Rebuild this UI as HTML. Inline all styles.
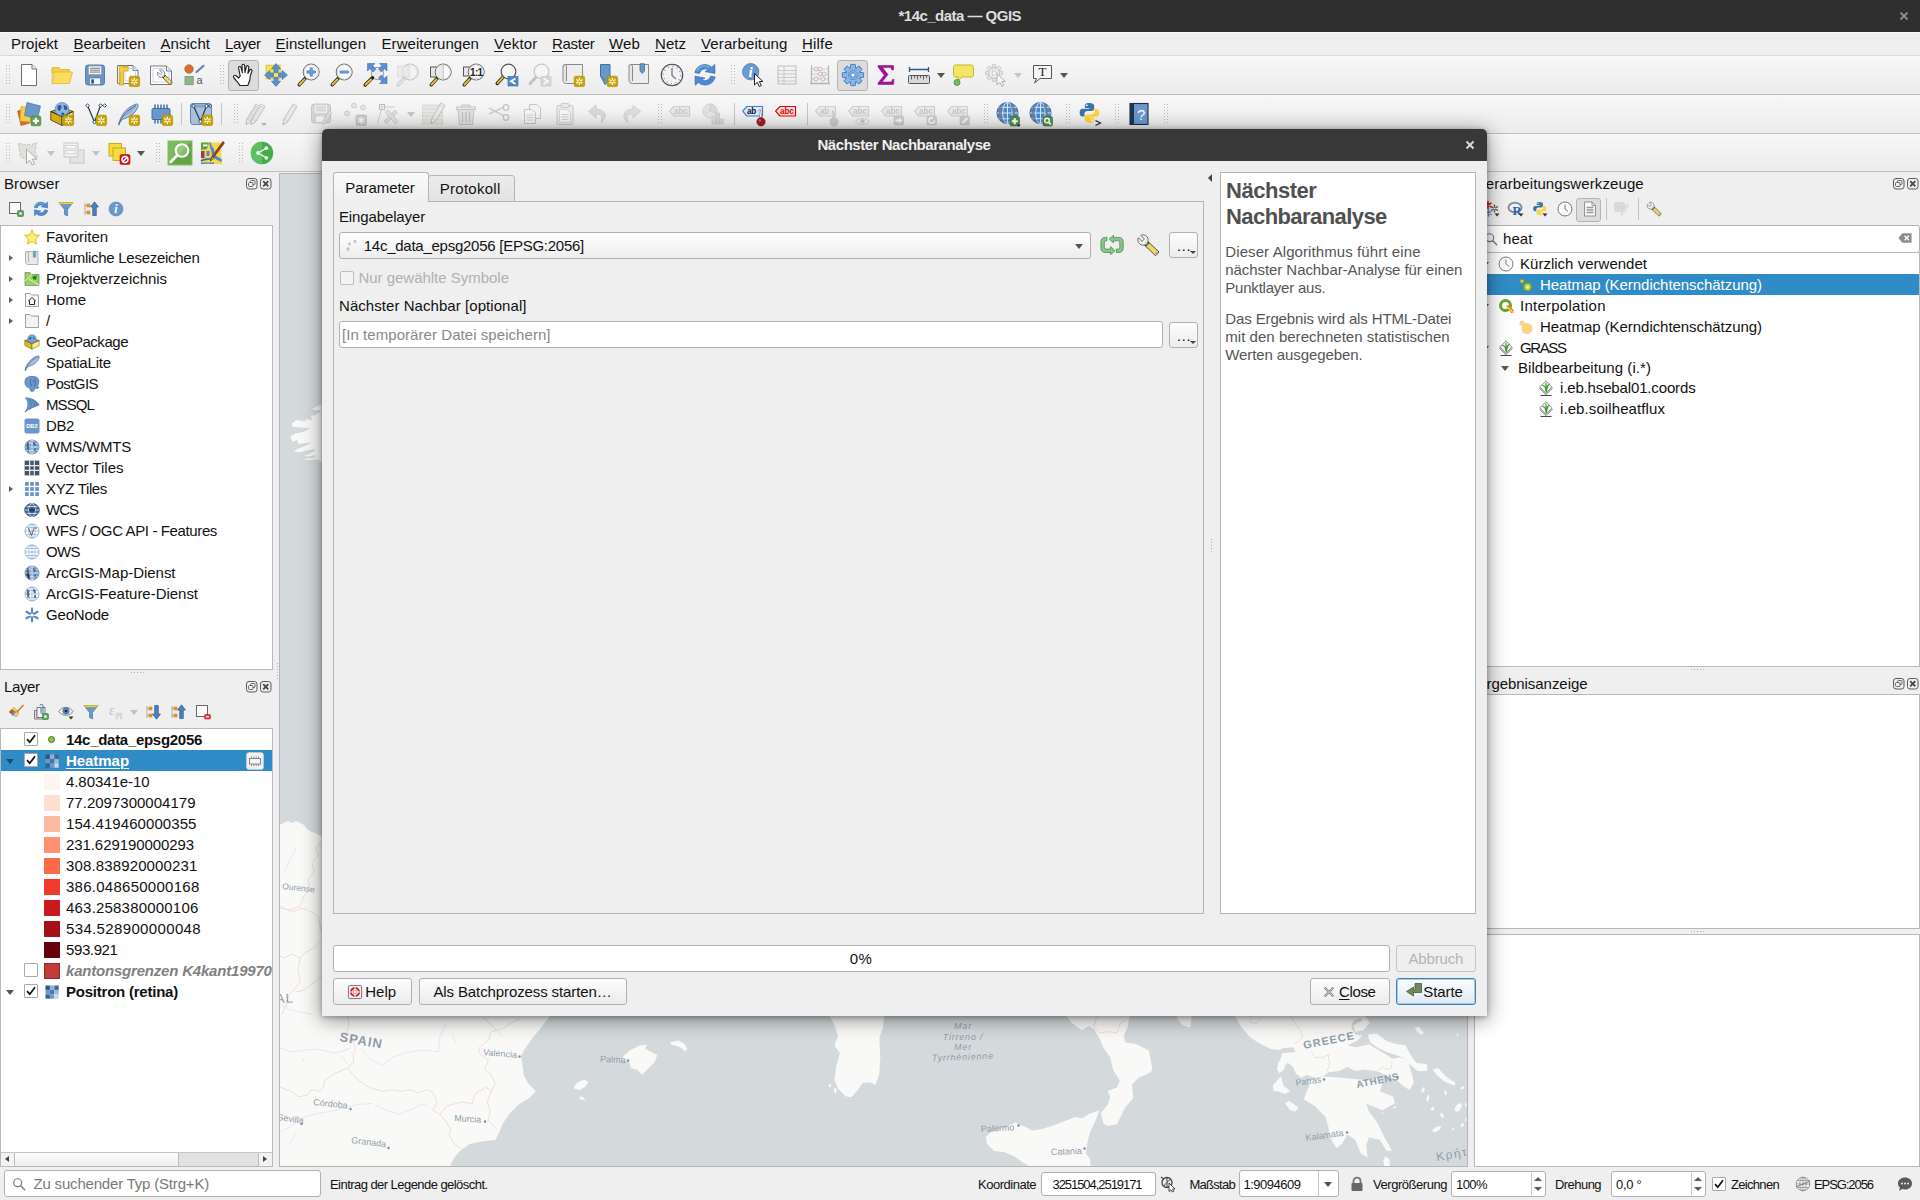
<!DOCTYPE html>
<html lang="de"><head><meta charset="utf-8"><title>*14c_data — QGIS</title>
<style>
*{box-sizing:border-box;margin:0;padding:0}
html,body{width:1920px;height:1200px;overflow:hidden;background:#efefef}
body{font-family:"Liberation Sans","DejaVu Sans",sans-serif;font-size:15px;color:#111;position:relative;-webkit-font-smoothing:antialiased}
.a{position:absolute}
.t{position:absolute;white-space:pre;line-height:20px;height:20px}
u{text-decoration:underline;text-underline-offset:2px;text-decoration-thickness:1px}
#titlebar{left:0;top:0;width:1920px;height:32px;background:#2f2f2f}
#titlebar .t{color:#dedede;font-weight:bold;font-size:15px}
#menubar{left:0;top:32px;width:1920px;height:24px;background:#efefef;border-top:1px solid #fafafa;border-bottom:1px solid #d9d9d9}
.tb{left:0;width:1920px;height:38px;background:linear-gradient(#f7f7f7,#ececec);border-bottom:1px solid #bdbdbd;border-top:1px solid #f9f9f9}
.hdl{position:absolute;width:5px;height:22px;background-image:radial-gradient(circle,#b8b8b8 0.8px,transparent 1px);background-size:3px 3px}
.sep{position:absolute;width:1px;height:22px;background:#c4c4c4}
.ic{position:absolute;width:24px;height:24px;overflow:visible}
.ic16{position:absolute;width:16px;height:16px;overflow:visible}
.pressed{position:absolute;background:#dcdcdc;border:1px solid #b4b4b4;border-radius:3px}
.box{position:absolute;background:#fff;border:1px solid #b9b9b9}
.dockbtn{position:absolute;width:12px;height:12px;border:1px solid #555;border-radius:3px}
.arrow-r{position:absolute;width:0;height:0;border-left:4px solid #5f5f5f;border-top:3.5px solid transparent;border-bottom:3.5px solid transparent}
.arrow-d{position:absolute;width:0;height:0;border-top:5px solid #555;border-left:4px solid transparent;border-right:4px solid transparent}
.cb{position:absolute;width:14px;height:14px;border:1px solid #a8a8a8;background:#fff;border-radius:1px}
.btn{position:absolute;border:1px solid #b0b0b0;border-radius:3px;background:linear-gradient(#fdfdfd,#ececec)}
.inp{position:absolute;border:1px solid #b0b0b0;border-radius:3px;background:#fff}
.grip{position:absolute;background-image:radial-gradient(circle,#b0b0b0 0.7px,transparent 0.9px);background-size:3px 3px}
</style>
</head>
<body>
<div class="a" id="titlebar"></div>
<div class="t " style="left:898.5px;top:6px;letter-spacing:-0.524px;color:#dedede;font-weight:bold;font-size:15px">*14c_data — QGIS</div>
<svg class="a" style="left:1899px;top:11px;width:10px;height:10px" viewBox="0 0 10 10"><path d="M1.500 1.500L8.500 8.500M8.500 1.500L1.500 8.500" stroke="#8f8f8f" stroke-width="1.800"/></svg>
<div class="a" id="menubar"></div>
<div class="t " style="left:11px;top:34px;letter-spacing:0.045px;">Pro<u>j</u>ekt</div>
<div class="t " style="left:73.5px;top:34px;letter-spacing:-0.055px;"><u>B</u>earbeiten</div>
<div class="t " style="left:160.5px;top:34px;letter-spacing:0.044px;"><u>A</u>nsicht</div>
<div class="t " style="left:225px;top:34px;letter-spacing:-0.404px;"><u>L</u>ayer</div>
<div class="t " style="left:275.5px;top:34px;letter-spacing:0.033px;"><u>E</u>instellungen</div>
<div class="t " style="left:381.5px;top:34px;letter-spacing:0.060px;">Er<u>w</u>eiterungen</div>
<div class="t " style="left:494px;top:34px;letter-spacing:0.163px;"><u>V</u>ektor</div>
<div class="t " style="left:552px;top:34px;letter-spacing:-0.280px;"><u>R</u>aster</div>
<div class="t " style="left:609px;top:34px;letter-spacing:0.143px;"><u>W</u>eb</div>
<div class="t " style="left:655px;top:34px;letter-spacing:0.039px;"><u>N</u>etz</div>
<div class="t " style="left:701px;top:34px;letter-spacing:0.120px;"><u>V</u>erarbeitung</div>
<div class="t " style="left:802px;top:34px;letter-spacing:0.199px;"><u>H</u>ilfe</div>
<div class="a tb" style="left:0px;top:56px;width:1920px;height:39px;"></div>
<div class="a tb" style="left:0px;top:95px;width:1920px;height:39px;"></div>
<div class="a tb" style="left:0px;top:134px;width:1920px;height:38px;"></div>
<div class="hdl" style="left:5px;top:64px;width:5px;height:22px;"></div>
<svg class="a" style="left:17.0px;top:63.0px;width:24px;height:24px;overflow:visible" viewBox="0 0 24 24"><path d="M4.5 1.5H15L19.5 6V22.5H4.5Z" fill="#fff" stroke="#6e6e6e" stroke-width="1"/><path d="M15 1.5V6H19.5" fill="#f2f2f2" stroke="#6e6e6e" stroke-width="1"/></svg>
<svg class="a" style="left:50.0px;top:63.0px;width:24px;height:24px;overflow:visible" viewBox="0 0 24 24"><path d="M2 4.5H9L10.5 6.5H19.5V10H2Z" fill="#f4cf47" stroke="#d9b53a" stroke-width=".8"/><path d="M4.5 9H22.5L19.5 20.5H2.2Z" fill="#fbdc5e" stroke="#dcb93e" stroke-width=".8"/><path d="M2.2 20.5V5" stroke="#dcb93e" stroke-width=".8"/></svg>
<svg class="a" style="left:83.0px;top:63.0px;width:24px;height:24px;overflow:visible" viewBox="0 0 24 24"><rect x="2.500" y="2" width="19" height="20" rx="2.500" fill="#6a93c6" stroke="#5580b4" stroke-width="1"/><rect x="5.500" y="3" width="13" height="8.500" fill="#efefef" stroke="#9a9a9a" stroke-width=".600"/><path d="M7 5.300H17M7 7.200H17M7 9.100H17" stroke="#555" stroke-width=".700"/><rect x="6.500" y="15" width="11" height="6.500" fill="#f4f4f4" stroke="#4a6f9e" stroke-width=".600"/><rect x="8.300" y="16.300" width="2.600" height="4.200" fill="#2f507d"/></svg>
<svg class="a" style="left:116.0px;top:63.0px;width:24px;height:24px;overflow:visible" viewBox="0 0 24 24"><path d="M1.500 2.500H17L22 7.500V20.500H1.500Z" fill="#fff" stroke="#7a7a7a" stroke-width="1"/><path d="M17 2.500V7.500H22" fill="#f0f0f0" stroke="#7a7a7a"/><path d="M9 5.500H19.500V18H9Z" fill="none" stroke="#b8c8ee" stroke-width=".800"/><path d="M3.300 3.300H12.100V8H7.500V22H3.300Z" fill="#f6cf3e" stroke="#c9a227" stroke-width=".800"/><path d="M3.500 10H5.500M3.500 12H5M3.500 14H5.500M3.500 16H5M3.500 18H5.500M3.500 20H5M8 3.500V5.500M10 3.500V5" stroke="#b8921d" stroke-width=".600"/><rect x="13.2" y="13.2" width="10.4" height="10.4" rx="1.6" fill="#c9a400" stroke="#a88a00" stroke-width=".6"/><g stroke="#fff" stroke-width="1.25" transform="translate(18.4 18.4)"><path d="M0 -3.700V3.700M-3.200 -1.850L3.200 1.850M-3.200 1.850L3.200 -1.850"/></g><circle cx="18.4" cy="18.4" r="1.150" fill="#c9a400"/></svg>
<svg class="a" style="left:149.0px;top:63.0px;width:24px;height:24px;overflow:visible" viewBox="0 0 24 24"><path d="M1.500 3H17.500L22.500 8V21.500H1.500Z" fill="#fff" stroke="#7a7a7a" stroke-width="1"/><path d="M17.500 3V8H22.500" fill="#f0f0f0" stroke="#7a7a7a"/><path d="M4 5.500H20V19H4Z" fill="none" stroke="#b8c8ee" stroke-width=".800"/><g transform="translate(7 5.500) scale(.72)"><path d="M8.400 12L12 8.600L23 19L19.600 22.800Z" fill="#ecd774" stroke="#5a4f1e" stroke-width="1" stroke-linejoin="round"/><path d="M8.400 12L12 8.600L13.600 10.100L10 13.500Z" fill="#3a3a3a"/><path d="M4.720 2.320A5.200 5.200 0 1 1 2.320 4.720L6 8.400L8.400 6Z" fill="#f2f2f2" stroke="#6e6e6e" stroke-width="1" stroke-linejoin="round"/><path d="M9.400 11L11 9.400" stroke="#c8c8c8" stroke-width="2.400"/><circle cx="20.600" cy="20.200" r="1" fill="#b9b9b9" stroke="#777" stroke-width=".400"/></g></svg>
<svg class="a" style="left:182.0px;top:63.0px;width:24px;height:24px;overflow:visible" viewBox="0 0 24 24"><circle cx="7" cy="6" r="4.300" fill="#d86c36" stroke="#b9562a" stroke-width=".600"/><rect x="3" y="13.500" width="8.200" height="8.200" fill="#8fb58d" stroke="#6f9a6d" stroke-width=".800"/><path d="M14.500 9L21.500 2.800" stroke="#5b85bd" stroke-width="2.200" stroke-linecap="round"/><text x="14.500" y="21" font-family="Liberation Sans,sans-serif" font-size="11" fill="#555">a</text></svg>
<div class="hdl" style="left:219px;top:64px;width:5px;height:22px;"></div>
<div class="pressed" style="left:228px;top:60px;width:31px;height:31px;"></div>
<svg class="a" style="left:231.0px;top:63.0px;width:24px;height:24px;overflow:visible" viewBox="0 0 24 24"><path d="M9.200 13.200L7.600 5.200C7.200 3.400 9.600 2.800 10.100 4.600L11.300 9.600L11 2.700C10.900 0.900 13.500 0.800 13.600 2.600L14 9.500L15.300 3.700C15.700 2 18.100 2.500 17.800 4.300L16.900 10.400L18.700 7.100C19.500 5.600 21.500 6.600 20.900 8.200L19.300 12.700C19.300 16.500 18.300 19.500 16.800 22.500H8.800C7.800 20 4.600 17.300 2.800 14.600C1.800 13.100 3.400 11.500 5 12.700L7.600 15Z" fill="#fff" stroke="#222" stroke-width="1.150" stroke-linejoin="round"/></svg>
<svg class="a" style="left:264.0px;top:63.0px;width:24px;height:24px;overflow:visible" viewBox="0 0 24 24"><rect x="2.100" y="2.200" width="14" height="13.600" fill="#f6e54a" stroke="#d4b62a" stroke-width=".800"/><g transform="translate(12 12)" fill="#5b8fce" stroke="#3d72b4" stroke-width=".700" stroke-linejoin="round"><path d="M0 -11.400L4.600 -6.200H2V-2.500H-2V-6.200H-4.600Z"/><g transform="rotate(90)"><path d="M0 -11.400L4.600 -6.200H2V-2.500H-2V-6.200H-4.600Z"/></g><g transform="rotate(180)"><path d="M0 -11.400L4.600 -6.200H2V-2.500H-2V-6.200H-4.600Z"/></g><g transform="rotate(270)"><path d="M0 -11.400L4.600 -6.200H2V-2.500H-2V-6.200H-4.600Z"/></g></g></svg>
<svg class="a" style="left:297.0px;top:63.0px;width:24px;height:24px;overflow:visible" viewBox="0 0 24 24"><path d="M8.800 14.600L2.200 21.800" stroke="#222" stroke-width="3.400" stroke-linecap="round"/><path d="M7.400 16.300L2.500 21.500" stroke="#f0c330" stroke-width="1.900" stroke-linecap="round"/><circle cx="14.200" cy="9" r="8" fill="#fafafa" stroke="#666" stroke-width="1"/><circle cx="14.200" cy="9" r="7" fill="none" stroke="#dcdcdc" stroke-width="1"/><path d="M14.200 4.400V13.600M9.600 9H18.800" stroke="#3d72b4" stroke-width="2.800"/><path d="M14.200 4.900V13.100M10.100 9H18.300" stroke="#6fa0dc" stroke-width="1.600"/></svg>
<svg class="a" style="left:330.0px;top:63.0px;width:24px;height:24px;overflow:visible" viewBox="0 0 24 24"><path d="M8.800 14.600L2.200 21.800" stroke="#222" stroke-width="3.400" stroke-linecap="round"/><path d="M7.400 16.300L2.500 21.500" stroke="#f0c330" stroke-width="1.900" stroke-linecap="round"/><circle cx="14.200" cy="9" r="8" fill="#fafafa" stroke="#666" stroke-width="1"/><circle cx="14.200" cy="9" r="7" fill="none" stroke="#dcdcdc" stroke-width="1"/><path d="M9.600 9H18.800" stroke="#3d72b4" stroke-width="2.800"/><path d="M10.100 9H18.300" stroke="#6fa0dc" stroke-width="1.600"/></svg>
<svg class="a" style="left:363.0px;top:63.0px;width:24px;height:24px;overflow:visible" viewBox="0 0 24 24"><circle cx="14.500" cy="10.500" r="6.200" fill="#ececec" stroke="#9a9a9a" stroke-width="1"/><g fill="#5b8fce" stroke="#3d72b4" stroke-width=".600" stroke-linejoin="round"><g transform="translate(4.500 0.500)"><path d="M0 0H7.500L5.200 2.300L8.500 5.600L5.600 8.500L2.300 5.200L0 7.500Z"/></g><g transform="translate(24 0.500) scale(-1 1)"><path d="M0 0H7.500L5.200 2.300L8.500 5.600L5.600 8.500L2.300 5.200L0 7.500Z"/></g><g transform="translate(24 20.500) scale(-1 -1)"><path d="M0 0H7.500L5.200 2.300L8.500 5.600L5.600 8.500L2.300 5.200L0 7.500Z"/></g></g><path d="M9.500 14.800L2.200 22" stroke="#222" stroke-width="3.400" stroke-linecap="round"/><path d="M8 16.500L2.500 21.700" stroke="#f0c330" stroke-width="1.900" stroke-linecap="round"/></svg>
<svg class="a" style="left:396.0px;top:63.0px;width:24px;height:24px;opacity:.5;filter:grayscale(.6);overflow:visible" viewBox="0 0 24 24"><path d="M8.800 14.600L2.200 21.800" stroke="#999" stroke-width="3.400" stroke-linecap="round"/><path d="M7.400 16.300L2.500 21.500" stroke="#ddd" stroke-width="1.900" stroke-linecap="round"/><circle cx="14.200" cy="9" r="8" fill="#f3f3f3" stroke="#888" stroke-width="1"/><circle cx="14.200" cy="9" r="7" fill="none" stroke="#dcdcdc" stroke-width="1"/><rect x="1.500" y="3" width="12" height="11" fill="#e2dcc0" stroke="#999" stroke-width=".600" opacity=".700"/></svg>
<svg class="a" style="left:429.0px;top:63.0px;width:24px;height:24px;overflow:visible" viewBox="0 0 24 24"><rect x="1.500" y="4" width="11" height="10" fill="#e6e6e6" stroke="#555" stroke-width="1"/><path d="M8.800 14.600L2.200 21.800" stroke="#222" stroke-width="3.400" stroke-linecap="round"/><path d="M7.400 16.300L2.500 21.500" stroke="#f0c330" stroke-width="1.900" stroke-linecap="round"/><circle cx="14.200" cy="9" r="8" fill="#fafafa" stroke="#666" stroke-width="1"/><circle cx="14.200" cy="9" r="7" fill="none" stroke="#dcdcdc" stroke-width="1"/><path d="M14.200 1.600A7.400 7.400 0 0 0 14.200 16.400Z" fill="#e6e6e6" opacity=".800"/><path d="M14.200 1.500V16.500" stroke="#bbb" stroke-width=".900"/></svg>
<svg class="a" style="left:462.0px;top:63.0px;width:24px;height:24px;overflow:visible" viewBox="0 0 24 24"><rect x="1.500" y="4" width="9" height="9" fill="#e6e6e6" stroke="#555" stroke-width="1"/><path d="M8.800 14.600L2.200 21.800" stroke="#222" stroke-width="3.400" stroke-linecap="round"/><path d="M7.400 16.300L2.500 21.500" stroke="#f0c330" stroke-width="1.900" stroke-linecap="round"/><circle cx="14.200" cy="9" r="8" fill="#fafafa" stroke="#666" stroke-width="1"/><circle cx="14.200" cy="9" r="7" fill="none" stroke="#dcdcdc" stroke-width="1"/><text x="14.300" y="12.600" text-anchor="middle" font-family="Liberation Sans,sans-serif" font-weight="bold" font-size="10" letter-spacing="-.700" fill="#222">1:1</text></svg>
<svg class="a" style="left:495.0px;top:63.0px;width:24px;height:24px;overflow:visible" viewBox="0 0 24 24"><path d="M8.500 13.600L2.200 20.500" stroke="#2b2b2b" stroke-width="3.400" stroke-linecap="round"/><path d="M8.300 13.900L2.600 20.100" stroke="#f0c330" stroke-width="1.700" stroke-linecap="round"/><circle cx="13.500" cy="8.500" r="7.300" fill="#f8f8f8" stroke="#555" stroke-width="1.200"/><rect x="13" y="13.500" width="10" height="9.500" fill="#4f86c6" stroke="#3a6ea8" stroke-width=".600"/><path d="M20.500 15.500L16 18.200L20.500 21" fill="none" stroke="#fff" stroke-width="2"/></svg>
<svg class="a" style="left:528.0px;top:63.0px;width:24px;height:24px;opacity:.5;filter:grayscale(.6);overflow:visible" viewBox="0 0 24 24"><path d="M8.500 13.600L2.200 20.500" stroke="#999" stroke-width="3.200" stroke-linecap="round"/><circle cx="13.500" cy="8.500" r="7.300" fill="#f8f8f8" stroke="#999" stroke-width="1.200"/><rect x="13" y="13.500" width="10" height="9.500" fill="#bbb" stroke="#999" stroke-width=".600"/><path d="M15.500 15.500L20 18.200L15.500 21" fill="none" stroke="#fff" stroke-width="2"/></svg>
<svg class="a" style="left:561.0px;top:63.0px;width:24px;height:24px;overflow:visible" viewBox="0 0 24 24"><path d="M4 1.500H21.500V20.500H5.500C3 20.500 2 19 2 17.500V3.500C2 1.500 4 1.500 4 1.500Z" fill="#e6e6e6" stroke="#8a8a8a" stroke-width="1"/><path d="M2 3.500C2 1 5.500 1 5.500 3.500V18" fill="none" stroke="#8a8a8a" stroke-width="1"/><path d="M6 2H21V20H6Z" fill="#efefef" opacity=".7"/><rect x="13.2" y="13.2" width="10.4" height="10.4" rx="1.6" fill="#c9a400" stroke="#a88a00" stroke-width=".6"/><g stroke="#fff" stroke-width="1.25" transform="translate(18.4 18.4)"><path d="M0 -3.700V3.700M-3.200 -1.850L3.200 1.850M-3.200 1.850L3.200 -1.850"/></g><circle cx="18.4" cy="18.4" r="1.150" fill="#c9a400"/></svg>
<svg class="a" style="left:594.0px;top:63.0px;width:24px;height:24px;overflow:visible" viewBox="0 0 24 24"><path d="M6.500 1.500H16V14H13.500V19L6.500 13Z" fill="#6b97cb" stroke="#3f6ea8" stroke-width="1" stroke-linejoin="round"/><path d="M6.500 13L11 21.500L13.500 19" fill="#6b97cb" stroke="#3f6ea8" stroke-width="1" stroke-linejoin="round"/><rect x="13.2" y="13.2" width="10.4" height="10.4" rx="1.6" fill="#c9a400" stroke="#a88a00" stroke-width=".6"/><g stroke="#fff" stroke-width="1.25" transform="translate(18.4 18.4)"><path d="M0 -3.700V3.700M-3.200 -1.850L3.200 1.850M-3.200 1.850L3.200 -1.850"/></g><circle cx="18.4" cy="18.4" r="1.150" fill="#c9a400"/></svg>
<svg class="a" style="left:627.0px;top:63.0px;width:24px;height:24px;overflow:visible" viewBox="0 0 24 24"><path d="M4 1.500H21.500V20.500H5.500C3 20.500 2 19 2 17.500V3.500C2 1.500 4 1.500 4 1.500Z" fill="#e6e6e6" stroke="#8a8a8a" stroke-width="1"/><path d="M2 3.500C2 1 5.500 1 5.500 3.500V18" fill="none" stroke="#8a8a8a" stroke-width="1"/><path d="M6 2H21V20H6Z" fill="#efefef" opacity=".7"/><path d="M13 0.800H17.500V8L15.250 10.500L13 8Z" fill="#6b97cb" stroke="#3f6ea8" stroke-width=".800"/></svg>
<svg class="a" style="left:660.0px;top:63.0px;width:24px;height:24px;overflow:visible" viewBox="0 0 24 24"><circle cx="12" cy="12" r="10.700" fill="#f2f2f2" stroke="#4a4a4a" stroke-width="1.100"/><circle cx="12" cy="12" r="8.600" fill="none" stroke="#6d9ad0" stroke-width="1.300" stroke-dasharray="1.100 3.403"/><path d="M12 5V12.500L16 16" fill="none" stroke="#777" stroke-width="1.300"/></svg>
<svg class="a" style="left:693.0px;top:63.0px;width:24px;height:24px;overflow:visible" viewBox="0 0 24 24"><g fill="#4d8ad0" stroke="#2f6bb3" stroke-width=".700" stroke-linejoin="round"><path d="M1.800 9.600A10.200 10.200 0 0 1 18.600 4.200L21.800 1.400L22 10.400L12 8.600L15.400 6.800A6 6 0 0 0 6.400 10.400Z"/><g transform="rotate(180 12 11.800)"><path d="M1.800 9.600A10.200 10.200 0 0 1 18.600 4.200L21.800 1.400L22 10.400L12 8.600L15.400 6.800A6 6 0 0 0 6.400 10.400Z"/></g></g><path d="M3.800 8A8.500 8.500 0 0 1 16.500 4.400" fill="none" stroke="#8ab6e8" stroke-width="1.300" opacity=".800"/></svg>
<div class="hdl" style="left:730px;top:64px;width:5px;height:22px;"></div>
<svg class="a" style="left:742.0px;top:63.0px;width:24px;height:24px;overflow:visible" viewBox="0 0 24 24"><circle cx="8.700" cy="8.700" r="8.200" fill="#6a99d2" stroke="#4f7fb9" stroke-width=".800"/><text x="8.700" y="14.200" text-anchor="middle" font-family="Liberation Serif,serif" font-style="italic" font-weight="bold" font-size="15" fill="#fff">i</text><path d="M12.500 10.500V22L15.300 19.300L17.300 23.500L19.300 22.500L17.300 18.500H21Z" fill="#fff" stroke="#222" stroke-width="1"/></svg>
<svg class="a" style="left:775.0px;top:63.0px;width:24px;height:24px;opacity:.5;filter:grayscale(.6);overflow:visible" viewBox="0 0 24 24"><rect x="3" y="3" width="18" height="18" fill="#f2f2f2" stroke="#888" stroke-width="1"/><path d="M3 7.5H21M3 11H21M3 14.5H21M3 18H21M9 3V21" stroke="#999" stroke-width=".9"/></svg>
<svg class="a" style="left:808.0px;top:63.0px;width:24px;height:24px;opacity:.5;filter:grayscale(.6);overflow:visible" viewBox="0 0 24 24"><path d="M3.5 2.5V20.5M20.5 2.5V20.5M2 20.5H22" stroke="#777" stroke-width="1.3" fill="none"/><path d="M3.5 6H20.5M3.5 11H20.5M3.5 16H20.5" stroke="#999" stroke-width=".8"/><g fill="#f3f3f3" stroke="#b55" stroke-width=".8"><circle cx="8" cy="6" r="2"/><circle cx="12" cy="6" r="2"/><circle cx="16" cy="11" r="2"/><circle cx="12" cy="11" r="2"/><circle cx="8" cy="16" r="2"/><circle cx="15" cy="16" r="2"/></g></svg>
<div class="pressed" style="left:837px;top:60px;width:31px;height:31px;"></div>
<svg class="a" style="left:841.0px;top:63.0px;width:24px;height:24px;overflow:visible" viewBox="0 0 24 24"><g transform="translate(12 12)"><g fill="#8ab4ea" stroke="#3f74b8" stroke-width=".900" stroke-linejoin="round"><path d="M-2.2 -10.6H2.2L2.700 -6H-2.700Z" transform="rotate(0)"/><path d="M-2.2 -10.6H2.2L2.700 -6H-2.700Z" transform="rotate(45)"/><path d="M-2.2 -10.6H2.2L2.700 -6H-2.700Z" transform="rotate(90)"/><path d="M-2.2 -10.6H2.2L2.700 -6H-2.700Z" transform="rotate(135)"/><path d="M-2.2 -10.6H2.2L2.700 -6H-2.700Z" transform="rotate(180)"/><path d="M-2.2 -10.6H2.2L2.700 -6H-2.700Z" transform="rotate(225)"/><path d="M-2.2 -10.6H2.2L2.700 -6H-2.700Z" transform="rotate(270)"/><path d="M-2.2 -10.6H2.2L2.700 -6H-2.700Z" transform="rotate(315)"/></g><circle r="7.300" fill="#8ab4ea" stroke="#3f74b8" stroke-width=".900"/><circle r="6.800" fill="#8ab4ea"/><g fill="#8ab4ea"><path d="M-1.700 -9.800H1.700L2.100 -6H-2.100Z" transform="rotate(0)"/><path d="M-1.700 -9.800H1.700L2.100 -6H-2.100Z" transform="rotate(45)"/><path d="M-1.700 -9.800H1.700L2.100 -6H-2.100Z" transform="rotate(90)"/><path d="M-1.700 -9.800H1.700L2.100 -6H-2.100Z" transform="rotate(135)"/><path d="M-1.700 -9.800H1.700L2.100 -6H-2.100Z" transform="rotate(180)"/><path d="M-1.700 -9.800H1.700L2.100 -6H-2.100Z" transform="rotate(225)"/><path d="M-1.700 -9.800H1.700L2.100 -6H-2.100Z" transform="rotate(270)"/><path d="M-1.700 -9.800H1.700L2.100 -6H-2.100Z" transform="rotate(315)"/></g><circle r="4.600" fill="none" stroke="#5b90d4" stroke-width="1"/><circle r="2.300" fill="#f4f4f4" stroke="#3f74b8" stroke-width=".900"/></g></svg>
<svg class="a" style="left:874.0px;top:63.0px;width:24px;height:24px;overflow:visible" viewBox="0 0 24 24"><path d="M4 2.5H19.5V7H17.8C17.5 5.2 16.8 4.6 15 4.6H8.6L14 11.6L8 19H15.5C17.5 19 18 18.2 18.4 16.4H20L19.5 21.5H4V20L10.3 12.2L4 4Z" fill="#a3119a" stroke="#7d0b78" stroke-width=".5"/></svg>
<svg class="a" style="left:907.0px;top:63.0px;width:24px;height:24px;overflow:visible" viewBox="0 0 24 24"><path d="M2.5 4V9M21.5 4V9M2.5 6.5H21.5" stroke="#2f5a8a" stroke-width="1.3" fill="none"/><rect x="1.5" y="12.5" width="21" height="8" rx="1" fill="#d9d9d9" stroke="#555" stroke-width="1"/><path d="M4.5 12.5V16.5M7.5 12.5V15M10.5 12.5V16.5M13.5 12.5V15M16.5 12.5V16.5M19.5 12.5V15" stroke="#555" stroke-width=".9"/></svg>
<div class="arrow-d" style="left:937px;top:73px;"></div>
<svg class="a" style="left:951.0px;top:63.0px;width:24px;height:24px;overflow:visible" viewBox="0 0 24 24"><path d="M5 2H20C21.8 2 22.5 3 22.5 4.5V11.5C22.5 13 21.8 14 20 14H11L6.5 18.5L7.5 14H5C3.2 14 2.5 13 2.5 11.5V4.5C2.5 3 3.2 2 5 2Z" fill="#f3e565" stroke="#c7b42b" stroke-width="1"/><circle cx="6" cy="19.5" r="3" fill="#7fb56c" stroke="#4e8a3d" stroke-width=".8"/></svg>
<svg class="a" style="left:984.0px;top:63.0px;width:24px;height:24px;opacity:.5;filter:grayscale(.6);overflow:visible" viewBox="0 0 24 24"><g transform="translate(10 10) scale(.82)"><g fill="#ddd" stroke="#888" stroke-width=".9"><path d="M-1.9 -10.2H1.9L2.3 -6H-2.3Z"/><path d="M-1.9 -10.2H1.9L2.3 -6H-2.3Z" transform="rotate(45)"/><path d="M-1.9 -10.2H1.9L2.3 -6H-2.3Z" transform="rotate(90)"/><path d="M-1.9 -10.2H1.9L2.3 -6H-2.3Z" transform="rotate(135)"/><path d="M-1.9 -10.2H1.9L2.3 -6H-2.3Z" transform="rotate(180)"/><path d="M-1.9 -10.2H1.9L2.3 -6H-2.3Z" transform="rotate(225)"/><path d="M-1.9 -10.2H1.9L2.3 -6H-2.3Z" transform="rotate(270)"/><path d="M-1.9 -10.2H1.9L2.3 -6H-2.3Z" transform="rotate(315)"/></g><circle r="6.5" fill="#e8e8e8" stroke="#888" stroke-width=".9"/><path d="M-2 -3.5L4 0L-2 3.5Z" fill="#fff" stroke="#888" stroke-width=".8"/></g><path d="M13 11V22L15.8 19.3L17.8 23.5L19.8 22.5L17.8 18.5H21.5Z" fill="#fff" stroke="#777" stroke-width="1"/></svg>
<div class="arrow-d" style="left:1014px;top:73px;opacity:.3;"></div>
<svg class="a" style="left:1030.0px;top:63.0px;width:24px;height:24px;overflow:visible" viewBox="0 0 24 24"><path d="M3.5 2.5H21.5V15.5H10L4.5 20L6.5 15.5H3.5Z" fill="#f4f6f6" stroke="#555" stroke-width="1"/><text x="12.5" y="13.2" text-anchor="middle" font-family="Liberation Serif,serif" font-size="13" fill="#222">T</text></svg>
<div class="arrow-d" style="left:1060px;top:73px;"></div>
<div class="hdl" style="left:5px;top:103px;width:5px;height:22px;"></div>
<svg class="a" style="left:17.0px;top:102.0px;width:24px;height:24px;overflow:visible" viewBox="0 0 24 24"><path d="M0.500 9L8.500 6.500L13 21L4 23.500Z" fill="#d9673a" stroke="#b8552d" stroke-width=".600"/><path d="M4 4.500L14.500 5.500L13.500 20L3 19Z" fill="#f6cf3e" stroke="#c9a227" stroke-width=".600"/><path d="M10 0.500L23.500 4L20.500 17L7.500 13.500Z" fill="#6c97cb" stroke="#4776ad" stroke-width=".700"/><rect x="14" y="14" width="9.800" height="9.800" rx="1.600" fill="#5aa05a" stroke="#3d7f3d" stroke-width=".600"/><path d="M18.900 15.800V22M15.800 18.900H22" stroke="#fff" stroke-width="2.200"/></svg>
<svg class="a" style="left:50.0px;top:102.0px;width:24px;height:24px;overflow:visible" viewBox="0 0 24 24"><path d="M0.800 9.500L12 6L23.200 9.500L12 14.500Z" fill="#d9b100" stroke="#333" stroke-width=".800"/><path d="M0.800 9.500V18L12 23.500V14.500Z" fill="#d8ae00" stroke="#333" stroke-width=".800"/><path d="M23.200 9.500V18L12 23.500V14.500Z" fill="#fbf06a" stroke="#333" stroke-width=".800"/><circle cx="12" cy="7.500" r="7" fill="#8fb4e3" stroke="#4d78b0" stroke-width=".600"/><path d="M7.500 4.500C8.500 2.500 11 2.500 11.500 4.500C12 6.500 10 7 10 9C8.500 9.500 7 7 7.500 4.500ZM13.500 3.500C15.500 2.500 17.500 4.500 17.500 7C16.500 9 14.500 8 14 6.500ZM11 11L13.500 10.500L14.500 12.500L12 13.500Z" fill="#2f5a94"/><path d="M0.800 9.500L12 14.500L23.200 9.500" fill="none" stroke="#333" stroke-width=".800"/><rect x="13.2" y="13.2" width="10.4" height="10.4" rx="1.6" fill="#c9a400" stroke="#a88a00" stroke-width=".6"/><g stroke="#fff" stroke-width="1.25" transform="translate(18.4 18.4)"><path d="M0 -3.700V3.700M-3.200 -1.850L3.200 1.850M-3.200 1.850L3.200 -1.850"/></g><circle cx="18.4" cy="18.4" r="1.150" fill="#c9a400"/></svg>
<svg class="a" style="left:83.0px;top:102.0px;width:24px;height:24px;overflow:visible" viewBox="0 0 24 24"><path d="M4.5 3.5L11.5 20L17.5 3.5H21.5" fill="none" stroke="#1f3b57" stroke-width="1.2"/><g fill="#fff" stroke="#1f3b57" stroke-width=".9"><path d="M4.5 1.7L6.3 3.5L4.5 5.3L2.7 3.5Z"/><path d="M17.5 1.7L19.3 3.5L17.5 5.3L15.7 3.5Z"/><path d="M21.7 1.7L23.5 3.5L21.7 5.3L19.9 3.5Z"/><circle cx="11.5" cy="20" r="1.6"/></g><rect x="13.2" y="13.2" width="10.4" height="10.4" rx="1.6" fill="#c9a400" stroke="#a88a00" stroke-width=".6"/><g stroke="#fff" stroke-width="1.25" transform="translate(18.4 18.4)"><path d="M0 -3.700V3.700M-3.200 -1.850L3.200 1.850M-3.200 1.850L3.200 -1.850"/></g><circle cx="18.4" cy="18.4" r="1.150" fill="#c9a400"/></svg>
<svg class="a" style="left:116.0px;top:102.0px;width:24px;height:24px;overflow:visible" viewBox="0 0 24 24"><path d="M2.5 23C4 15 9 6 20 2C22 1.5 22.5 3 22 4.5C20 11 13 16 7 17C5 18.5 3.5 21 3 23Z" fill="#a7c0de" stroke="#4b73a6" stroke-width=".8"/><path d="M3 22C6 14 11 8 20 3.5" fill="none" stroke="#3f6799" stroke-width=".9"/><path d="M8 14L16 9M10 11L17 6.5M13 8.5L19.5 4.5" stroke="#6f92bf" stroke-width=".6"/><rect x="13.2" y="13.2" width="10.4" height="10.4" rx="1.6" fill="#c9a400" stroke="#a88a00" stroke-width=".6"/><g stroke="#fff" stroke-width="1.25" transform="translate(18.4 18.4)"><path d="M0 -3.700V3.700M-3.200 -1.850L3.200 1.850M-3.200 1.850L3.200 -1.850"/></g><circle cx="18.4" cy="18.4" r="1.150" fill="#c9a400"/></svg>
<svg class="a" style="left:149.0px;top:102.0px;width:24px;height:24px;overflow:visible" viewBox="0 0 24 24"><rect x="3" y="6.5" width="18" height="11" rx="1" fill="#6c97cb" stroke="#3f6ea8" stroke-width="1"/><path d="M6 2.5V6.5M9 2.5V6.5M12 2.5V6.5M15 2.5V6.5M18 2.5V6.5M6 17.5V21.5M9 17.5V21.5M12 17.5V21.5" stroke="#2f5a8f" stroke-width="1.3"/><rect x="13.2" y="13.2" width="10.4" height="10.4" rx="1.6" fill="#c9a400" stroke="#a88a00" stroke-width=".6"/><g stroke="#fff" stroke-width="1.25" transform="translate(18.4 18.4)"><path d="M0 -3.700V3.700M-3.200 -1.850L3.200 1.850M-3.200 1.850L3.200 -1.850"/></g><circle cx="18.4" cy="18.4" r="1.150" fill="#c9a400"/></svg>
<div class="sep" style="left:181px;top:103px;width:1px;height:22px;"></div>
<svg class="a" style="left:189.0px;top:102.0px;width:24px;height:24px;overflow:visible" viewBox="0 0 24 24"><rect x="1.5" y="1.5" width="21" height="21" rx="2.5" fill="#a9bfdb" stroke="#5f84b4" stroke-width="1"/><path d="M1.5 4H22.5" stroke="#6b8ebd" stroke-width="3" opacity=".6"/><path d="M4.5 4L11.5 19.5L17.5 4H21" fill="none" stroke="#1f3b57" stroke-width="1.2"/><g fill="#fff" stroke="#1f3b57" stroke-width=".8"><circle cx="4.5" cy="4" r="1.5"/><circle cx="17.5" cy="4" r="1.5"/><circle cx="21.2" cy="4" r="1.3"/><circle cx="11.5" cy="19.5" r="1.6"/></g><rect x="13.2" y="13.2" width="10.4" height="10.4" rx="1.6" fill="#c9a400" stroke="#a88a00" stroke-width=".6"/><g stroke="#fff" stroke-width="1.25" transform="translate(18.4 18.4)"><path d="M0 -3.700V3.700M-3.200 -1.850L3.200 1.850M-3.200 1.850L3.200 -1.850"/></g><circle cx="18.4" cy="18.4" r="1.150" fill="#c9a400"/></svg>
<div class="sep" style="left:221px;top:103px;width:1px;height:22px;"></div>
<div class="hdl" style="left:233px;top:103px;width:5px;height:22px;"></div>
<svg class="a" style="left:244.0px;top:102.0px;width:24px;height:24px;opacity:.5;filter:grayscale(.6);overflow:visible" viewBox="0 0 24 24"><g transform="translate(-2 0)"><path d="M4 22.5L5 17L14 2L18 4.5L9 19.5Z" fill="#d8c7c1" stroke="#8d8474" stroke-width=".9" stroke-linejoin="round"/><path d="M14 2L18 4.5L17 6.2L13 3.8Z" fill="#f3f3f3" stroke="#8d8474" stroke-width=".6"/><path d="M4 22.5L5 17L9 19.5Z" fill="#f5efe2" stroke="#8d8474" stroke-width=".7"/><path d="M4 22.5L4.4 20.5L5.7 21.3Z" fill="#777"/></g><g transform="translate(3 0)"><path d="M4 22.5L5 17L14 2L18 4.5L9 19.5Z" fill="#e0d8c8" stroke="#8d8474" stroke-width=".9" stroke-linejoin="round"/><path d="M14 2L18 4.5L17 6.2L13 3.8Z" fill="#f3f3f3" stroke="#8d8474" stroke-width=".6"/><path d="M4 22.5L5 17L9 19.5Z" fill="#f5efe2" stroke="#8d8474" stroke-width=".7"/><path d="M4 22.5L4.4 20.5L5.7 21.3Z" fill="#777"/></g><path d="M17 21H23L20 24Z" fill="#777"/></svg>
<svg class="a" style="left:277.0px;top:102.0px;width:24px;height:24px;opacity:.5;filter:grayscale(.6);overflow:visible" viewBox="0 0 24 24"><g transform="translate(2 0)"><path d="M4 22.5L5 17L14 2L18 4.5L9 19.5Z" fill="#e6dfcf" stroke="#8d8474" stroke-width=".9" stroke-linejoin="round"/><path d="M14 2L18 4.5L17 6.2L13 3.8Z" fill="#f3f3f3" stroke="#8d8474" stroke-width=".6"/><path d="M4 22.5L5 17L9 19.5Z" fill="#f5efe2" stroke="#8d8474" stroke-width=".7"/><path d="M4 22.5L4.4 20.5L5.7 21.3Z" fill="#777"/></g></svg>
<svg class="a" style="left:310.0px;top:102.0px;width:24px;height:24px;opacity:.5;filter:grayscale(.6);overflow:visible" viewBox="0 0 24 24"><rect x="1.5" y="2" width="19" height="19" rx="2.5" fill="#b9b9b9" stroke="#999" stroke-width="1"/><rect x="4.5" y="3" width="13" height="8.5" fill="#ececec" stroke="#aaa" stroke-width=".6"/><path d="M6 5.2H16M6 7H16M6 8.8H16" stroke="#999" stroke-width=".9"/><rect x="5.5" y="14" width="9" height="6.5" fill="#f1f1f1" stroke="#999" stroke-width=".6"/><g transform="translate(10 8) scale(.65)"><g transform="translate(0 0)"><path d="M4 22.5L5 17L14 2L18 4.5L9 19.5Z" fill="#d8c7c1" stroke="#8d8474" stroke-width=".9" stroke-linejoin="round"/><path d="M14 2L18 4.5L17 6.2L13 3.8Z" fill="#f3f3f3" stroke="#8d8474" stroke-width=".6"/><path d="M4 22.5L5 17L9 19.5Z" fill="#f5efe2" stroke="#8d8474" stroke-width=".7"/><path d="M4 22.5L4.4 20.5L5.7 21.3Z" fill="#777"/></g></g></svg>
<svg class="a" style="left:343.0px;top:102.0px;width:24px;height:24px;opacity:.5;filter:grayscale(.6);overflow:visible" viewBox="0 0 24 24"><g fill="#d5d5d5" stroke="#9a9a9a" stroke-width=".8"><circle cx="11" cy="3.5" r="2.5"/><circle cx="20" cy="5.5" r="2.5"/><circle cx="4" cy="11.5" r="2.5"/></g><rect x="13" y="13" width="10.5" height="10.5" rx="1.5" fill="#a9a28d" stroke="#8d8672" stroke-width=".6"/><g stroke="#fff" stroke-width="1.3" transform="translate(18.2 18.2)"><path d="M0 -3.8V3.8M-3.3 -1.9L3.3 1.9M-3.3 1.9L3.3 -1.9"/></g></svg>
<svg class="a" style="left:376.0px;top:102.0px;width:24px;height:24px;opacity:.5;filter:grayscale(.6);overflow:visible" viewBox="0 0 24 24"><rect x="3.5" y="2.5" width="5" height="5" fill="#fff" stroke="#777" stroke-width=".9"/><circle cx="6" cy="5" r="1.2" fill="none" stroke="#777" stroke-width=".7"/><path d="M8.5 5H19M5.5 7.5L1.5 21" stroke="#999" stroke-width=".9"/><path d="M8 19L19 8L21.5 10.5L10.5 21.5Z" fill="#cfc7b0" stroke="#999" stroke-width=".7"/><path d="M9 10L12 7.5L22 19.5L19.5 22Z" fill="#d8d0b8" stroke="#999" stroke-width=".7"/></svg>
<svg class="a" style="left:421.0px;top:102.0px;width:24px;height:24px;opacity:.5;filter:grayscale(.6);overflow:visible" viewBox="0 0 24 24"><g fill="#ddd6bf" stroke="#b5ad94" stroke-width=".7"><rect x="1.5" y="3" width="20" height="5"/><rect x="1.5" y="10" width="20" height="5"/><rect x="1.5" y="17" width="20" height="5"/></g><g transform="translate(6 -1)"><g transform="translate(0 0)"><path d="M4 22.5L5 17L14 2L18 4.5L9 19.5Z" fill="#e9e2d4" stroke="#8d8474" stroke-width=".9" stroke-linejoin="round"/><path d="M14 2L18 4.5L17 6.2L13 3.8Z" fill="#f3f3f3" stroke="#8d8474" stroke-width=".6"/><path d="M4 22.5L5 17L9 19.5Z" fill="#f5efe2" stroke="#8d8474" stroke-width=".7"/><path d="M4 22.5L4.4 20.5L5.7 21.3Z" fill="#777"/></g></g></svg>
<svg class="a" style="left:454.0px;top:102.0px;width:24px;height:24px;opacity:.5;filter:grayscale(.6);overflow:visible" viewBox="0 0 24 24"><path d="M4 7.5H20L18.5 22.5H5.5Z" fill="#d8cfcf" stroke="#a48f8f" stroke-width="1"/><path d="M2.5 5H21.5V7.5H2.5Z M8 5V3H16V5" fill="#e4dcdc" stroke="#a48f8f" stroke-width="1"/><path d="M8.5 10V20M12 10V20M15.5 10V20" stroke="#a48f8f" stroke-width="1.3"/></svg>
<svg class="a" style="left:487.0px;top:102.0px;width:24px;height:24px;opacity:.5;filter:grayscale(.6);overflow:visible" viewBox="0 0 24 24"><path d="M2 6L17 14M2 12L17 5" stroke="#aaa" stroke-width="1.6" fill="none"/><circle cx="19" cy="5.5" r="2.8" fill="none" stroke="#999" stroke-width="1.3"/><circle cx="19" cy="15.5" r="2.8" fill="none" stroke="#999" stroke-width="1.3"/></svg>
<svg class="a" style="left:520.0px;top:102.0px;width:24px;height:24px;opacity:.5;filter:grayscale(.6);overflow:visible" viewBox="0 0 24 24"><path d="M9.5 2.5H17L20.5 6V16.5H9.5Z" fill="#f4f4f4" stroke="#999" stroke-width="1"/><path d="M4.5 7.5H12L15.5 11V21.5H4.5Z" fill="#f8f8f8" stroke="#999" stroke-width="1"/><path d="M6.5 13H13.5M6.5 15.5H13.5M6.5 18H13.5" stroke="#aaa" stroke-width=".9"/></svg>
<svg class="a" style="left:553.0px;top:102.0px;width:24px;height:24px;opacity:.5;filter:grayscale(.6);overflow:visible" viewBox="0 0 24 24"><rect x="4" y="3.5" width="16" height="19" rx="1.5" fill="#e6e6e6" stroke="#999" stroke-width="1"/><rect x="8" y="1.5" width="8" height="4" rx="1" fill="#ddd" stroke="#999" stroke-width=".9"/><path d="M6.5 7.5H14L17.5 10.5V20.5H6.5Z" fill="#fafafa" stroke="#aaa" stroke-width=".8"/><path d="M8.5 12.5H15.5M8.5 15H15.5M8.5 17.5H15.5" stroke="#aaa" stroke-width=".9"/></svg>
<svg class="a" style="left:586.0px;top:102.0px;width:24px;height:24px;opacity:.5;filter:grayscale(.6);overflow:visible" viewBox="0 0 24 24"><path d="M10 3L2.5 9.5L10 16V12C15 11.5 17.5 14 15 20.5C21.5 16 20.5 7 10 7Z" fill="#c9c3b4" stroke="#a59f90" stroke-width=".8" stroke-linejoin="round"/></svg>
<svg class="a" style="left:619.0px;top:102.0px;width:24px;height:24px;opacity:.5;filter:grayscale(.6);overflow:visible" viewBox="0 0 24 24"><path d="M14 3L21.5 9.5L14 16V12C9 11.5 6.5 14 9 20.5C2.5 16 3.5 7 14 7Z" fill="#c9cbc2" stroke="#a5a79c" stroke-width=".8" stroke-linejoin="round"/></svg>
<div class="arrow-d" style="left:407px;top:112px;opacity:.3;"></div>
<div class="hdl" style="left:657px;top:103px;width:5px;height:22px;"></div>
<svg class="a" style="left:668.0px;top:102.0px;width:24px;height:24px;opacity:.5;filter:grayscale(.6);overflow:visible" viewBox="0 0 24 24"><g transform="translate(1 0)"><path d="M0.600 9.200L5 4.500H20.500V14H5Z" fill="#e6e2d2" stroke="#b0aa94" stroke-width="1.200" stroke-linejoin="round"/><text x="11.8" y="12.300" text-anchor="middle" font-family="Liberation Sans,sans-serif" font-weight="bold" font-size="8.200" letter-spacing="-.200" fill="#999">abc</text></g></svg>
<svg class="a" style="left:701.0px;top:102.0px;width:24px;height:24px;opacity:.5;filter:grayscale(.6);overflow:visible" viewBox="0 0 24 24"><circle cx="9" cy="9" r="7" fill="#ded9c8" stroke="#aaa" stroke-width=".8"/><path d="M9 9V2A7 7 0 0 1 15.5 11.5Z" fill="#d8b8b8" stroke="#aaa" stroke-width=".6"/><path d="M9 9L3 12.5A7 7 0 0 1 9 2Z" fill="#c8d8c8" stroke="#aaa" stroke-width=".6"/><rect x="11" y="15" width="3.5" height="7" fill="#c8d8c8" stroke="#999" stroke-width=".6"/><rect x="15" y="11" width="3.5" height="11" fill="#d8b8b8" stroke="#999" stroke-width=".6"/><rect x="19" y="17" width="3.5" height="5" fill="#c0c8d8" stroke="#999" stroke-width=".6"/></svg>
<div class="sep" style="left:734px;top:103px;width:1px;height:22px;"></div>
<svg class="a" style="left:742.0px;top:102.0px;width:24px;height:24px;overflow:visible" viewBox="0 0 24 24"><path d="M0.600 9.200L5 4.500H20.500V14H5Z" fill="#dfeafa" stroke="#3d80e0" stroke-width="1.200" stroke-linejoin="round"/><text x="9.5" y="12.300" text-anchor="middle" font-family="Liberation Sans,sans-serif" font-weight="bold" font-size="8.200" letter-spacing="-.200" fill="#111">ab</text><path d="M17.800 8.500L19 17" stroke="#888" stroke-width="2.400" stroke-linecap="round"/><path d="M17.800 8.800L18.900 16.500" stroke="#f8f8f8" stroke-width="1.200" stroke-linecap="round"/><circle cx="19" cy="19.800" r="4.200" fill="#a31c20" stroke="#7b1215" stroke-width=".600"/><circle cx="17.800" cy="18.500" r="1.300" fill="#d56a6a" opacity=".800"/></svg>
<svg class="a" style="left:775.0px;top:102.0px;width:24px;height:24px;overflow:visible" viewBox="0 0 24 24"><path d="M0.600 9.200L5 4.500H20.500V14H5Z" fill="#ffe3e3" stroke="#f00000" stroke-width="1.200" stroke-linejoin="round"/><text x="11.8" y="12.300" text-anchor="middle" font-family="Liberation Sans,sans-serif" font-weight="bold" font-size="8.200" letter-spacing="-.200" fill="#e60000">abc</text></svg>
<div class="sep" style="left:807px;top:103px;width:1px;height:22px;"></div>
<svg class="a" style="left:814.0px;top:102.0px;width:24px;height:24px;opacity:.5;filter:grayscale(.6);overflow:visible" viewBox="0 0 24 24"><g transform="translate(1 0)"><path d="M0.600 9.200L5 4.500H20.500V14H5Z" fill="#e6e2d2" stroke="#b0aa94" stroke-width="1.200" stroke-linejoin="round"/><text x="9.5" y="12.300" text-anchor="middle" font-family="Liberation Sans,sans-serif" font-weight="bold" font-size="8.200" letter-spacing="-.200" fill="#999">ab</text><path d="M17.800 8.500L19 17" stroke="#aaa" stroke-width="2.200"/><circle cx="19" cy="19.800" r="4.200" fill="#b5a5a5" stroke="#999" stroke-width=".600"/></g></svg>
<svg class="a" style="left:847.0px;top:102.0px;width:24px;height:24px;opacity:.5;filter:grayscale(.6);overflow:visible" viewBox="0 0 24 24"><g transform="translate(1 0)"><path d="M0.600 9.200L5 4.500H20.500V14H5Z" fill="#e6e2d2" stroke="#b0aa94" stroke-width="1.200" stroke-linejoin="round"/><text x="11.8" y="12.300" text-anchor="middle" font-family="Liberation Sans,sans-serif" font-weight="bold" font-size="8.200" letter-spacing="-.200" fill="#999">abc</text><path d="M7.500 19.500C10.500 15.500 18 15.500 21.500 19.500C18 23.500 10.500 23.500 7.500 19.500Z" fill="#eee" stroke="#999" stroke-width=".800"/><circle cx="14.500" cy="19.300" r="2" fill="#999"/></g></svg>
<svg class="a" style="left:880.0px;top:102.0px;width:24px;height:24px;opacity:.5;filter:grayscale(.6);overflow:visible" viewBox="0 0 24 24"><g transform="translate(1 0)"><path d="M0.600 9.200L5 4.500H20.500V14H5Z" fill="#e6e2d2" stroke="#b0aa94" stroke-width="1.200" stroke-linejoin="round"/><text x="11.8" y="12.300" text-anchor="middle" font-family="Liberation Sans,sans-serif" font-weight="bold" font-size="8.200" letter-spacing="-.200" fill="#999">abc</text><rect x="13" y="14" width="9.500" height="9" rx="1.500" fill="#aaa" stroke="#888" stroke-width=".500"/><path d="M14.500 17.500H18V15.500L21.500 18.500L18 21.500V19.500H14.500Z" fill="#fff"/></g></svg>
<svg class="a" style="left:913.0px;top:102.0px;width:24px;height:24px;opacity:.5;filter:grayscale(.6);overflow:visible" viewBox="0 0 24 24"><g transform="translate(1 0)"><path d="M0.600 9.200L5 4.500H20.500V14H5Z" fill="#e6e2d2" stroke="#b0aa94" stroke-width="1.200" stroke-linejoin="round"/><text x="11.8" y="12.300" text-anchor="middle" font-family="Liberation Sans,sans-serif" font-weight="bold" font-size="8.200" letter-spacing="-.200" fill="#999">abc</text><rect x="13" y="14" width="9.500" height="9" rx="1.500" fill="#aaa" stroke="#888" stroke-width=".500"/><path d="M20.500 18.500A2.800 2.800 0 1 1 17.700 15.700" fill="none" stroke="#fff" stroke-width="1.500"/><path d="M17 14.200L19.500 15.800L17 17.400Z" fill="#fff"/></g></svg>
<svg class="a" style="left:946.0px;top:102.0px;width:24px;height:24px;opacity:.5;filter:grayscale(.6);overflow:visible" viewBox="0 0 24 24"><g transform="translate(1 0)"><path d="M0.600 9.200L5 4.500H20.500V14H5Z" fill="#e6e2d2" stroke="#b0aa94" stroke-width="1.200" stroke-linejoin="round"/><text x="11.8" y="12.300" text-anchor="middle" font-family="Liberation Sans,sans-serif" font-weight="bold" font-size="8.200" letter-spacing="-.200" fill="#999">abc</text><rect x="13" y="14" width="9.500" height="9" rx="1.500" fill="#aaa" stroke="#888" stroke-width=".500"/><path d="M15 21.500L15.500 19.500L19.500 15.500L21 17L17 21Z" fill="#fff"/></g></svg>
<div class="hdl" style="left:983px;top:103px;width:5px;height:22px;"></div>
<svg class="a" style="left:996.0px;top:102.0px;width:24px;height:24px;overflow:visible" viewBox="0 0 24 24"><circle cx="11.500" cy="11" r="10.600" fill="#4c8ad2" stroke="#2d62a3" stroke-width=".800"/><g fill="none" stroke="#d9e7f7" stroke-width="1"><ellipse cx="11.500" cy="11" rx="4.800" ry="10.600"/><path d="M11.500 0.400V21.600M0.900 11H22.100M2.600 5.300H20.400M2.600 16.700H20.400"/></g><path d="M3.500 4C6 6 5 9.500 3.500 12C3 15 5.500 17.500 7 19.500M16 2C15 5 18.500 7 17.500 10.500C19 14 17.500 17 16 20" fill="none" stroke="#777" stroke-width="2.600" opacity=".750"/><rect x="14" y="14.500" width="9.500" height="9.500" rx="1.500" fill="#4f9150" stroke="#2f6f31" stroke-width=".600"/><path d="M18.750 16.300V22.200M15.800 19.250H21.700" stroke="#fff" stroke-width="2.100"/><path d="M21 22.800L24.500 22.800L22.750 24.800Z" fill="#222"/></svg>
<svg class="a" style="left:1029.0px;top:102.0px;width:24px;height:24px;overflow:visible" viewBox="0 0 24 24"><circle cx="11.500" cy="11" r="10.600" fill="#4c8ad2" stroke="#2d62a3" stroke-width=".800"/><g fill="none" stroke="#d9e7f7" stroke-width="1"><ellipse cx="11.500" cy="11" rx="4.800" ry="10.600"/><path d="M11.500 0.400V21.600M0.900 11H22.100M2.600 5.300H20.400M2.600 16.700H20.400"/></g><path d="M3.500 4C6 6 5 9.500 3.500 12C3 15 5.500 17.500 7 19.500M16 2C15 5 18.500 7 17.500 10.500C19 14 17.500 17 16 20" fill="none" stroke="#777" stroke-width="2.600" opacity=".750"/><rect x="14" y="14.500" width="9.500" height="9.500" rx="1.500" fill="#4f9150" stroke="#2f6f31" stroke-width=".600"/><circle cx="18" cy="18.500" r="2.300" fill="none" stroke="#fff" stroke-width="1.400"/><path d="M19.700 20.300L22 22.600" stroke="#fff" stroke-width="1.600"/></svg>
<div class="hdl" style="left:1065px;top:103px;width:5px;height:22px;"></div>
<svg class="a" style="left:1078.0px;top:102.0px;width:24px;height:24px;overflow:visible" viewBox="0 0 24 24"><g transform="translate(0 -.5) scale(.92)"><path d="M11.8 1.5C8.5 1.5 7.5 2.8 7.5 4.5V7H12.2V8H5C3 8 1.8 9.5 1.8 12.2C1.8 15 3 16.4 5 16.4H7V13.6C7 11.8 8.5 10.4 10.3 10.4H15C16.5 10.4 17.6 9.2 17.6 7.7V4.5C17.6 2.8 15.8 1.5 11.8 1.5Z" fill="#3a75a8"/><circle cx="9.6" cy="4.2" r="1" fill="#fff"/><path d="M13.2 23C16.5 23 17.5 21.7 17.5 20V17.5H12.8V16.5H20C22 16.5 23.2 15 23.2 12.3C23.2 9.5 22 8.1 20 8.1H18V10.9C18 12.7 16.5 14.1 14.7 14.1H10C8.5 14.1 7.4 15.3 7.4 16.8V20C7.4 21.7 9.2 23 13.2 23Z" fill="#fdd43b"/><circle cx="15.4" cy="20.3" r="1" fill="#fff"/></g><path d="M17.5 18.5L22.5 21L17.5 23.5" fill="none" stroke="#222" stroke-width="1.2"/></svg>
<div class="hdl" style="left:1114px;top:103px;width:5px;height:22px;"></div>
<svg class="a" style="left:1127.0px;top:102.0px;width:24px;height:24px;overflow:visible" viewBox="0 0 24 24"><rect x="3" y="1.5" width="18" height="21" fill="#6a97cc" stroke="#1e2f45" stroke-width="1.1"/><rect x="3" y="1.5" width="4" height="21" fill="#20344f"/><text x="14.2" y="17.5" text-anchor="middle" font-family="Liberation Sans,sans-serif" font-size="15" fill="#fff">?</text></svg>
<div class="hdl" style="left:1163px;top:103px;width:5px;height:22px;"></div>
<div class="hdl" style="left:5px;top:142px;width:5px;height:22px;"></div>
<svg class="a" style="left:17.0px;top:141.0px;width:24px;height:24px;opacity:.5;filter:grayscale(.6);overflow:visible" viewBox="0 0 24 24"><path d="M1.500 2.500L14 4L19.500 1.500L18 11L21 17L10 19L3.500 15.500Z" fill="#d8d0b4" stroke="#888" stroke-width=".900" stroke-dasharray="3 1.500"/><path d="M9.500 8V22.500L12.800 19.300L15.200 24L17.600 22.800L15.300 18.200H20Z" fill="#fff" stroke="#666" stroke-width="1"/></svg>
<div class="arrow-d" style="left:47px;top:151px;opacity:.3;"></div>
<svg class="a" style="left:62.0px;top:141.0px;width:24px;height:24px;opacity:.5;filter:grayscale(.6);overflow:visible" viewBox="0 0 24 24"><rect x="8" y="9" width="14" height="13" fill="#dcdcd0" stroke="#999" stroke-width="1"/><rect x="2" y="2" width="14" height="14" fill="#f2f2f2" stroke="#999" stroke-width="1"/><rect x="4" y="4.500" width="10" height="3.200" fill="#fff" stroke="#aaa" stroke-width=".800"/><rect x="4" y="9.500" width="10" height="3.200" fill="#fff" stroke="#aaa" stroke-width=".800"/></svg>
<div class="arrow-d" style="left:92px;top:151px;opacity:.3;"></div>
<svg class="a" style="left:107.0px;top:141.0px;width:24px;height:24px;overflow:visible" viewBox="0 0 24 24"><rect x="2" y="2.5" width="12.5" height="12.5" fill="#f6dc3c" stroke="#c7a920" stroke-width="1"/><rect x="6" y="7" width="12.5" height="12.5" fill="#f6dc3c" stroke="#c7a920" stroke-width="1"/><rect x="13" y="13.5" width="10" height="10" rx="1.5" fill="#d9141c" stroke="#a80e14" stroke-width=".6"/><circle cx="18" cy="18.5" r="3" fill="none" stroke="#fff" stroke-width="1.4"/><path d="M15.9 20.6L20.1 16.4" stroke="#fff" stroke-width="1.4"/></svg>
<div class="arrow-d" style="left:137px;top:151px;"></div>
<div class="hdl" style="left:155px;top:142px;width:5px;height:22px;"></div>
<svg class="a" style="left:168.0px;top:141.0px;width:24px;height:24px;overflow:visible" viewBox="0 0 24 24"><rect x="0" y="0" width="24" height="24" fill="#62a546"/><path d="M0 0H24L0 24Z" fill="#8cc570" opacity=".600"/><rect x="0" y="0" width="24" height="24" fill="none" stroke="#7fbf63" stroke-width="1"/><circle cx="14" cy="9.500" r="6.300" fill="#b9dca6" fill-opacity=".450" stroke="#fff" stroke-width="2.100"/><path d="M9.300 14.200L3 20.800" stroke="#f4f4f4" stroke-width="3" stroke-linecap="round"/></svg>
<svg class="a" style="left:200.0px;top:141.0px;width:24px;height:24px;overflow:visible" viewBox="0 0 24 24"><path d="M1 1.500H20.500L22 23H1Z" fill="#f6d84a"/><path d="M1 1.500H9L7 8L1 9Z" fill="#5aa646"/><rect x="3" y="3.500" width="4.500" height="1.800" fill="#fff"/><path d="M1 10H4.500V17H1Z" fill="#9a3a6a"/><path d="M6.500 10H9.500V15H6.500Z" fill="#4f8ad0"/><path d="M11 1.500C11 6 15 7 14.500 11C14 15 19 16 21.500 18L21.800 21C17 19 11.500 17 11.500 12C11.500 8 9 6 9.500 1.500Z" fill="#4f8ad0"/><path d="M1 20C5 17 9 19 12 17.500" fill="none" stroke="#3a6ab0" stroke-width="1.600"/><path d="M1 22.500C6 21 10 23 14 22" fill="none" stroke="#4f8ad0" stroke-width="1.400"/><path d="M23.200 1.800L12 17" stroke="#8a4516" stroke-width="2.800" stroke-linecap="round"/><path d="M12.800 15.800L10 20L14.300 17.300Z" fill="#e8c98a" stroke="#333" stroke-width=".500"/><path d="M10 20L11 18.600L11.600 19.200Z" fill="#222"/></svg>
<div class="hdl" style="left:238px;top:142px;width:5px;height:22px;"></div>
<svg class="a" style="left:250.0px;top:141.0px;width:24px;height:24px;overflow:visible" viewBox="0 0 24 24"><circle cx="12" cy="12" r="11.200" fill="#43ad49"/><path d="M12 0.800A11.200 11.200 0 0 0 12 23.200Z" fill="#62bd62"/><g fill="#f4f4f4"><circle cx="16.300" cy="7.200" r="1.900"/><circle cx="8" cy="12" r="1.900"/><circle cx="16.300" cy="16.800" r="1.900"/></g><path d="M16.300 7.200L8 12L16.300 16.800" fill="none" stroke="#f4f4f4" stroke-width="1.300"/></svg>
<div class="t " style="left:4px;top:174px;letter-spacing:0.070px;font-size:15px">Browser</div>
<svg class="a" style="left:246px;top:178px;width:26px;height:12px" viewBox="0 0 26 12"><rect x="0.500" y="0.500" width="10.500" height="10.500" rx="2.500" fill="none" stroke="#5a5a5a"/><rect x="4.500" y="2.500" width="4.500" height="4" rx="1" fill="none" stroke="#5a5a5a" stroke-width=".9"/><rect x="2.500" y="4.500" width="4.500" height="4" rx="1" fill="#efefef" stroke="#5a5a5a" stroke-width=".9"/><rect x="14.500" y="0.500" width="10.500" height="10.500" rx="2.500" fill="none" stroke="#5a5a5a"/><path d="M17.200 3.200L22.300 8.300M22.300 3.200L17.200 8.300" stroke="#4a4a4a" stroke-width="1.900"/></svg>
<svg class="a" style="left:8.0px;top:201.0px;width:16px;height:16px;overflow:visible" viewBox="0 0 16 16"><rect x="1.500" y="1.500" width="11" height="11" fill="#fdfdfd" stroke="#666" stroke-width="1"/><rect x="9.500" y="9.500" width="6" height="6" rx="1.200" fill="#5aa05a" stroke="#3d7f3d" stroke-width=".600"/><circle cx="12.500" cy="12.500" r="1.600" fill="#cfe6cf"/></svg>
<svg class="a" style="left:33.0px;top:201.0px;width:16px;height:16px;overflow:visible" viewBox="0 0 16 16"><g transform="scale(.667)"><g fill="#4d8ad0" stroke="#2f6bb3" stroke-width=".700" stroke-linejoin="round"><path d="M1.800 9.600A10.200 10.200 0 0 1 18.600 4.200L21.800 1.400L22 10.400L12 8.600L15.400 6.800A6 6 0 0 0 6.400 10.400Z"/><g transform="rotate(180 12 11.800)"><path d="M1.800 9.600A10.200 10.200 0 0 1 18.600 4.200L21.800 1.400L22 10.400L12 8.600L15.400 6.800A6 6 0 0 0 6.400 10.400Z"/></g></g><path d="M3.800 8A8.500 8.500 0 0 1 16.500 4.400" fill="none" stroke="#8ab6e8" stroke-width="1.300" opacity=".800"/></g></svg>
<svg class="a" style="left:58.0px;top:201.0px;width:16px;height:16px;overflow:visible" viewBox="0 0 16 16"><path d="M1 1.500H15L9.500 8.500V15L6.500 13.500V8.500Z" fill="#6c97cb" stroke="#4776ad" stroke-width=".700"/><path d="M1 1.500H15L14 3H2Z" fill="#f3df3d" stroke="#c7b42b" stroke-width=".500"/></svg>
<svg class="a" style="left:83.0px;top:201.0px;width:16px;height:16px;overflow:visible" viewBox="0 0 16 16"><path d="M2 2V14M2 4.500H5M2 11.500H5" stroke="#999" stroke-width=".800" fill="none"/><rect x="4" y="3" width="3" height="3" fill="#f59b1c" stroke="#c67605" stroke-width=".500"/><rect x="4" y="10" width="3" height="3" fill="#f59b1c" stroke="#c67605" stroke-width=".500"/><path d="M11.500 0.800L15.500 6H13.300V14.500H9.700V6H7.500Z" fill="#4d7fbd" stroke="#2d5c95" stroke-width=".700"/></svg>
<svg class="a" style="left:108.0px;top:201.0px;width:16px;height:16px;overflow:visible" viewBox="0 0 16 16"><circle cx="8" cy="8" r="7" fill="#6c97cb" stroke="#4f7eb8" stroke-width=".600"/><text x="8" y="12.400" text-anchor="middle" font-family="Liberation Serif,serif" font-style="italic" font-weight="bold" font-size="12" fill="#fff">i</text></svg>
<div class="box" style="left:0px;top:225px;width:273px;height:445px;"></div>
<svg class="a" style="left:24.0px;top:229.0px;width:16px;height:16px;overflow:visible" viewBox="0 0 16 16"><path d="M8 0.800L10.200 5.800L15.500 6.300L11.500 9.900L12.700 15.200L8 12.400L3.300 15.200L4.500 9.900L0.500 6.300L5.800 5.800Z" fill="#fdf07a" stroke="#dab813" stroke-width=".900" stroke-linejoin="round"/></svg>
<div class="t " style="left:46px;top:227px;letter-spacing:-0.059px;">Favoriten</div>
<div class="arrow-r" style="left:9px;top:254.5px"></div>
<svg class="a" style="left:24.0px;top:250.0px;width:16px;height:16px;overflow:visible" viewBox="0 0 16 16"><path d="M3 1.500H14V14.500H4C2.500 14.500 1.500 13.500 1.500 12V3C1.500 1.500 3 1.500 3 1.500Z" fill="#e9e9e9" stroke="#a0a0a0" stroke-width=".800"/><path d="M1.500 3C1.500 1 4.500 1 4.500 3V12" fill="none" stroke="#a0a0a0" stroke-width=".800"/><path d="M9 1H12V6.500L10.500 8L9 6.500Z" fill="#6b97cb" stroke="#9bb6d8" stroke-width=".600"/></svg>
<div class="t " style="left:46px;top:248px;letter-spacing:-0.274px;">Räumliche Lesezeichen</div>
<div class="arrow-r" style="left:9px;top:275.5px"></div>
<svg class="a" style="left:24.0px;top:271.0px;width:16px;height:16px;overflow:visible" viewBox="0 0 16 16"><path d="M1 1.500H6L7.500 3.500H15V14.500H1Z" fill="#9ad25a" stroke="#777" stroke-width=".700"/><path d="M1 10L8 3.500M5 8L15 14" stroke="#e6f4cf" stroke-width="1"/><path d="M8.500 5.500L13 4.500L12 9L9 8Z" fill="#0b8a2b"/></svg>
<div class="t " style="left:46px;top:269px;letter-spacing:-0.040px;">Projektverzeichnis</div>
<div class="arrow-r" style="left:9px;top:296.5px"></div>
<svg class="a" style="left:24.0px;top:292.0px;width:16px;height:16px;overflow:visible" viewBox="0 0 16 16"><path d="M1.500 1.500H6L7.500 3H14.500V14.500H1.500Z" fill="#f7f7f7" stroke="#8a8a8a" stroke-width=".800"/><path d="M4.500 9L8 5.500L11.500 9M5.500 8.500V12.500H10.500V8.500" fill="none" stroke="#222" stroke-width="1"/></svg>
<div class="t " style="left:46px;top:290px;letter-spacing:-0.003px;">Home</div>
<div class="arrow-r" style="left:9px;top:317.5px"></div>
<svg class="a" style="left:24.0px;top:313.0px;width:16px;height:16px;overflow:visible" viewBox="0 0 16 16"><path d="M1.500 1.500H6L7.500 3H14.500V14.500H1.500Z" fill="#f3f3f3" stroke="#8a8a8a" stroke-width=".800"/></svg>
<div class="t " style="left:46px;top:311px;">/</div>
<svg class="a" style="left:24.0px;top:334.0px;width:16px;height:16px;overflow:visible" viewBox="0 0 16 16"><path d="M0.800 6.500L8 4L15.200 6.500L8 9.500Z" fill="#d9b100" stroke="#555" stroke-width=".500"/><path d="M0.800 6.500V11.500L8 15.200V9.500Z" fill="#e3bb0a" stroke="#555" stroke-width=".500"/><path d="M15.200 6.500V11.500L8 15.200V9.500Z" fill="#fbf06a" stroke="#555" stroke-width=".500"/><circle cx="8" cy="5" r="4.300" fill="#7ba3d6" stroke="#4d78b0" stroke-width=".500"/><path d="M5.500 3.500C6.500 2.500 7.500 3 7.500 4C7 5 6.500 5.500 6 6C5 5.500 5 4.500 5.500 3.500ZM9 3C10.500 2.800 11 4.500 10.500 5.500C9.500 5.500 9 4.500 9 3Z" fill="#2f5a94"/><path d="M0.800 6.500L8 9.500L15.200 6.500" fill="none" stroke="#555" stroke-width=".500"/></svg>
<div class="t " style="left:46px;top:332px;letter-spacing:-0.473px;">GeoPackage</div>
<svg class="a" style="left:24.0px;top:355.0px;width:16px;height:16px;overflow:visible" viewBox="0 0 16 16"><path d="M1 15.500C2 10 6 3.500 13.500 1C15.500 0.500 15.500 2 15 3C13.500 7.500 8.500 10.500 4.500 11.500C3 12.500 2 14 1.500 15.500Z" fill="#a7c0de" stroke="#4b73a6" stroke-width=".700"/><path d="M1.500 15C3.500 9.500 7 5 13.500 2" fill="none" stroke="#3f6799" stroke-width=".700"/></svg>
<div class="t " style="left:46px;top:353px;letter-spacing:-0.172px;">SpatiaLite</div>
<svg class="a" style="left:24.0px;top:376.0px;width:16px;height:16px;overflow:visible" viewBox="0 0 16 16"><path d="M3 1.500C6 0 10 0 12.500 1.200C15 2.500 15.500 6 14 9C13 11 13.500 11.500 15 11C14 13 11.500 13 11 11.500C10.500 14.500 10 15.500 7.500 15.500C6 15.500 6 13 5.500 11.500C2.500 12 0.500 8.500 1 5C1.200 3.300 2 2.200 3 1.500Z" fill="#6c97cb" stroke="#3f6ea8" stroke-width=".700"/><path d="M7 2.500C6 5 6.500 8 7.500 10M10.500 2C12 4 11.500 8 10.500 10.500" fill="none" stroke="#335f97" stroke-width=".700"/><circle cx="9.300" cy="5" r=".600" fill="#234"/></svg>
<div class="t " style="left:46px;top:374px;letter-spacing:-0.551px;">PostGIS</div>
<svg class="a" style="left:24.0px;top:397.0px;width:16px;height:16px;overflow:visible" viewBox="0 0 16 16"><path d="M1.500 0.800C8 1 13 4 15.200 8C11 9.500 5 11.500 1 15.200C4.500 10.500 5 5.500 1.500 0.800Z" fill="#6c97cb" stroke="#3f6ea8" stroke-width=".700"/><path d="M5 2C8 5.500 7.500 10 5.500 12.500M8.500 3C11 6 10.500 9 9.500 10.500M11.500 5C13 7 12.800 8.500 12.500 9.200" fill="none" stroke="#335f97" stroke-width=".600"/></svg>
<div class="t " style="left:46px;top:395px;letter-spacing:-0.903px;">MSSQL</div>
<svg class="a" style="left:24.0px;top:418.0px;width:16px;height:16px;overflow:visible" viewBox="0 0 16 16"><rect x="0.500" y="0.500" width="15" height="15" rx="2" fill="#6c97cb"/><text x="8" y="10" text-anchor="middle" font-family="Liberation Sans,sans-serif" font-size="5.800" font-weight="bold" fill="#fff">DB2</text></svg>
<div class="t " style="left:46px;top:416px;letter-spacing:-0.393px;">DB2</div>
<svg class="a" style="left:24.0px;top:439.0px;width:16px;height:16px;overflow:visible" viewBox="0 0 16 16"><circle cx="8" cy="8" r="7" fill="#7ea6d8" stroke="#4d78b0" stroke-width=".800"/><g fill="none" stroke="#dfeaf7" stroke-width=".700"><ellipse cx="8" cy="8" rx="3.200" ry="7"/><path d="M8 1V15M1 8H15M2.300 4.500H13.700M2.300 11.500H13.700"/></g><path d="M3 3.500C5 3 6 5 5 7C6 9 5 11 4.500 12.500C3 11 2 8 3 3.500ZM9 3C11 2.500 12.500 5 11.500 7C10 8 9 6 9 3ZM10 9.500L12 9L12 12L10.500 12.500Z" fill="#4a5a6a" opacity=".850"/></svg>
<div class="t " style="left:46px;top:437px;letter-spacing:-0.206px;">WMS/WMTS</div>
<svg class="a" style="left:24.0px;top:460.0px;width:16px;height:16px;overflow:visible" viewBox="0 0 16 16"><rect x="1" y="1" width="14" height="14" fill="#445566" stroke="#334455" stroke-width=".600"/><path d="M1 5.700H15M1 10.300H15M5.700 1V15M10.300 1V15" stroke="#e8edf2" stroke-width="1.200"/></svg>
<div class="t " style="left:46px;top:458px;letter-spacing:-0.003px;">Vector Tiles</div>
<div class="arrow-r" style="left:9px;top:485.5px"></div>
<svg class="a" style="left:24.0px;top:481.0px;width:16px;height:16px;overflow:visible" viewBox="0 0 16 16"><g fill="#6c97cb"><rect x="1" y="1" width="3.800" height="3.800"/><rect x="6.100" y="1" width="3.800" height="3.800"/><rect x="11.200" y="1" width="3.800" height="3.800"/><rect x="1" y="6.100" width="3.800" height="3.800"/><rect x="6.100" y="6.100" width="3.800" height="3.800"/><rect x="11.200" y="6.100" width="3.800" height="3.800"/><rect x="1" y="11.200" width="3.800" height="3.800"/><rect x="6.100" y="11.200" width="3.800" height="3.800"/><rect x="11.200" y="11.200" width="3.800" height="3.800"/></g></svg>
<div class="t " style="left:46px;top:479px;letter-spacing:-0.354px;">XYZ Tiles</div>
<svg class="a" style="left:24.0px;top:502.0px;width:16px;height:16px;overflow:visible" viewBox="0 0 16 16"><ellipse cx="8" cy="8" rx="7.300" ry="6.500" fill="#3f6799" stroke="#24405f" stroke-width=".800"/><g fill="none" stroke="#e4edf7" stroke-width=".800"><ellipse cx="8" cy="8" rx="3.200" ry="6.500"/><path d="M1 8H15M2.500 4.500H13.500M2.500 11.500H13.500"/></g><rect x="5" y="6.500" width="6" height="3" fill="#24405f"/></svg>
<div class="t " style="left:46px;top:500px;letter-spacing:-0.998px;">WCS</div>
<svg class="a" style="left:24.0px;top:523.0px;width:16px;height:16px;overflow:visible" viewBox="0 0 16 16"><circle cx="8" cy="8" r="7" fill="#fdfdfd" stroke="#7ea2d0" stroke-width=".800"/><g fill="none" stroke="#8fb0da" stroke-width=".700"><ellipse cx="8" cy="8" rx="3.200" ry="7"/><path d="M8 1V15M1 8H15M2.300 4.500H13.700M2.300 11.500H13.700"/></g><path d="M4.500 5L7.500 12.500L10 5.500C10.500 4.500 12 4.500 12.500 6" fill="none" stroke="#555" stroke-width=".900"/></svg>
<div class="t " style="left:46px;top:521px;letter-spacing:-0.377px;">WFS / OGC API - Features</div>
<svg class="a" style="left:24.0px;top:544.0px;width:16px;height:16px;overflow:visible" viewBox="0 0 16 16"><circle cx="8" cy="8" r="7" fill="#fdfdfd" stroke="#7ea2d0" stroke-width=".800"/><g fill="none" stroke="#8fb0da" stroke-width=".700"><ellipse cx="8" cy="8" rx="3.200" ry="7"/><path d="M8 1V15M1 8H15M2.300 4.500H13.700M2.300 11.500H13.700"/></g></svg>
<div class="t " style="left:46px;top:542px;letter-spacing:-0.610px;">OWS</div>
<svg class="a" style="left:24.0px;top:565.0px;width:16px;height:16px;overflow:visible" viewBox="0 0 16 16"><circle cx="8" cy="8" r="7" fill="#7ea6d8" stroke="#4d78b0" stroke-width=".800"/><g fill="none" stroke="#dfeaf7" stroke-width=".700"><ellipse cx="8" cy="8" rx="3.200" ry="7"/><path d="M8 1V15M1 8H15M2.300 4.500H13.700M2.300 11.500H13.700"/></g><path d="M3 3.500C5 3 6 5 5 7C6 9 5 11 4.500 12.500C3 11 2 8 3 3.500ZM9 3C11 2.500 12.500 5 11.500 7C10 8 9 6 9 3ZM10 9.500L12 9L12 12L10.500 12.500Z" fill="#4a5a6a" opacity=".850"/><path d="M2 9C3 12 5 14 6 14.500C5.500 12 6 10 5 9Z" fill="#333"/></svg>
<div class="t " style="left:46px;top:563px;letter-spacing:-0.031px;">ArcGIS-Map-Dienst</div>
<svg class="a" style="left:24.0px;top:586.0px;width:16px;height:16px;overflow:visible" viewBox="0 0 16 16"><circle cx="8" cy="8" r="7" fill="#fdfdfd" stroke="#7ea2d0" stroke-width=".800"/><g fill="none" stroke="#8fb0da" stroke-width=".700"><ellipse cx="8" cy="8" rx="3.200" ry="7"/><path d="M8 1V15M1 8H15M2.300 4.500H13.700M2.300 11.500H13.700"/></g><path d="M3 3.500C5 3 6 5 5 7C6 9 5 11 4.500 12.500C3 11 2 8 3 3.500ZM9 3C11 2.500 12.500 5 11.500 7C10 8 9 6 9 3ZM10 9.500L12 9L12 12L10.500 12.500Z" fill="#4a5a6a" opacity=".850"/></svg>
<div class="t " style="left:46px;top:584px;letter-spacing:-0.026px;">ArcGIS-Feature-Dienst</div>
<svg class="a" style="left:24.0px;top:607.0px;width:16px;height:16px;overflow:visible" viewBox="0 0 16 16"><g stroke="#5b88c0" stroke-width="2.200" stroke-linecap="round"><path d="M8 1.500V14.500M2.400 4.800L13.600 11.200M2.400 11.200L13.600 4.800"/></g><circle cx="8" cy="8" r="1.600" fill="#fff"/></svg>
<div class="t " style="left:46px;top:605px;letter-spacing:-0.173px;">GeoNode</div>
<div class="grip" style="left:130px;top:671px;width:16px;height:3px;"></div>
<div class="grip" style="left:276px;top:662px;width:3px;height:17px;"></div>
<div class="t " style="left:4px;top:677px;letter-spacing:-0.404px;">Layer</div>
<svg class="a" style="left:246px;top:681px;width:26px;height:12px" viewBox="0 0 26 12"><rect x="0.500" y="0.500" width="10.500" height="10.500" rx="2.500" fill="none" stroke="#5a5a5a"/><rect x="4.500" y="2.500" width="4.500" height="4" rx="1" fill="none" stroke="#5a5a5a" stroke-width=".9"/><rect x="2.500" y="4.500" width="4.500" height="4" rx="1" fill="#efefef" stroke="#5a5a5a" stroke-width=".9"/><rect x="14.500" y="0.500" width="10.500" height="10.500" rx="2.500" fill="none" stroke="#5a5a5a"/><path d="M17.200 3.200L22.300 8.300M22.300 3.200L17.200 8.300" stroke="#4a4a4a" stroke-width="1.900"/></svg>
<svg class="a" style="left:8.0px;top:704.0px;width:16px;height:16px;overflow:visible" viewBox="0 0 16 16"><path d="M1 8L6 3L11 8L7 12Z" fill="#f3d13c" stroke="#c9a227" stroke-width=".500"/><path d="M1 8L4 5L7.500 8.500L4.500 11Z" fill="#d24a3a"/><path d="M3 10L6.500 6.500L8.500 8.500L5 12Z" fill="#5b88c0"/><path d="M8 9L15 1.500" stroke="#c98a2b" stroke-width="1.800" stroke-linecap="round"/><path d="M5.500 10L8.500 7.500L10.500 10L8 13Z" fill="#e8c98a" stroke="#9b7e2b" stroke-width=".500"/></svg>
<svg class="a" style="left:33.0px;top:704.0px;width:16px;height:16px;overflow:visible" viewBox="0 0 16 16"><path d="M1.500 6.500H4V13.500H11V15H1.500Z" fill="#ddd" stroke="#666" stroke-width=".800"/><rect x="4" y="3.500" width="8" height="10" fill="#f4f4f4" stroke="#666" stroke-width=".800"/><path d="M7 1.500C7 0 10 0 10 1.500V8.500C10 10 8 10 8 8.500V4" fill="none" stroke="#3f6ea8" stroke-width="1"/><rect x="9.500" y="9.500" width="6" height="6" rx="1.200" fill="#5aa05a" stroke="#3d7f3d" stroke-width=".600"/><circle cx="12.500" cy="12.500" r="1.500" fill="#dff0df"/></svg>
<svg class="a" style="left:58.0px;top:704.0px;width:16px;height:16px;overflow:visible" viewBox="0 0 16 16"><path d="M0.800 7.500C4 2 11.500 2 15 7.500C11.500 12.500 4 12.500 0.800 7.500Z" fill="#f4f4f4" stroke="#777" stroke-width=".900"/><circle cx="8" cy="7" r="3.200" fill="#5b88c0" stroke="#3a5f92" stroke-width=".600"/><circle cx="8" cy="7" r="1.300" fill="#1b2b40"/><path d="M10.500 12.500H15.500L13 15.500Z" fill="#333"/></svg>
<svg class="a" style="left:83.0px;top:704.0px;width:16px;height:16px;overflow:visible" viewBox="0 0 16 16"><path d="M1 1.500H15L9.500 8.500V15L6.500 13.500V8.500Z" fill="#6c97cb" stroke="#4776ad" stroke-width=".700"/><path d="M1 1.500H15L14 3H2Z" fill="#f3df3d" stroke="#c7b42b" stroke-width=".500"/></svg>
<svg class="a" style="left:108.0px;top:704.0px;width:16px;height:16px;opacity:.5;filter:grayscale(.6);overflow:visible" viewBox="0 0 16 16"><text x="1" y="11" font-family="Liberation Serif,serif" font-size="14" fill="#888">ε</text><path d="M8 9H14V15H12.500V12H9.500V15H8Z" fill="#ccc" stroke="#aaa" stroke-width=".500"/></svg>
<svg class="a" style="left:145.0px;top:704.0px;width:16px;height:16px;overflow:visible" viewBox="0 0 16 16"><path d="M2 2V14M2 4.500H5M2 11.500H5" stroke="#999" stroke-width=".800" fill="none"/><rect x="4" y="3" width="3" height="3" fill="#f59b1c" stroke="#c67605" stroke-width=".500"/><rect x="4" y="10" width="3" height="3" fill="#f59b1c" stroke="#c67605" stroke-width=".500"/><path d="M11.500 15.200L15.500 10H13.300V1.500H9.700V10H7.500Z" fill="#4d7fbd" stroke="#2d5c95" stroke-width=".700"/></svg>
<svg class="a" style="left:170.0px;top:704.0px;width:16px;height:16px;overflow:visible" viewBox="0 0 16 16"><path d="M2 2V14M2 4.500H5M2 11.500H5" stroke="#999" stroke-width=".800" fill="none"/><rect x="4" y="3" width="3" height="3" fill="#f59b1c" stroke="#c67605" stroke-width=".500"/><rect x="4" y="10" width="3" height="3" fill="#f59b1c" stroke="#c67605" stroke-width=".500"/><path d="M11.500 0.800L15.500 6H13.300V14.500H9.700V6H7.500Z" fill="#4d7fbd" stroke="#2d5c95" stroke-width=".700"/></svg>
<svg class="a" style="left:195.0px;top:704.0px;width:16px;height:16px;overflow:visible" viewBox="0 0 16 16"><rect x="1.500" y="1.500" width="11" height="11" fill="#fdfdfd" stroke="#666" stroke-width="1"/><rect x="9.500" y="10.500" width="6" height="4.500" rx="1.200" fill="#e8384a" stroke="#c01828" stroke-width=".600"/><path d="M11 12.750H14" stroke="#fff" stroke-width="1.200"/></svg>
<div class="arrow-d" style="left:130px;top:710px;opacity:.3;"></div>
<div class="box" style="left:0px;top:728px;width:273px;height:439px;"></div>
<div class="cb" style="left:24px;top:732px;width:14px;height:14px;"></div>
<svg class="a" style="left:24px;top:732px;width:14px;height:14px" viewBox="0 0 14 14"><path d="M3 7.2L5.8 10.2L11 3.2" fill="none" stroke="#111" stroke-width="1.7"/></svg>
<div class="a" style="left:48px;top:736px;width:7px;height:7px;border-radius:50%;background:#8bc34a;border:1px solid #4b7a1c"></div>
<div class="t " style="left:66px;top:730px;letter-spacing:-0.290px;font-weight:bold;">14c_data_epsg2056</div>
<div class="a" style="left:1px;top:750px;width:271px;height:21px;background:#308cc6"></div>
<div class="arrow-d" style="left:6px;top:759px;border-top-color:#1c4c6c"></div>
<div class="cb" style="left:24px;top:753px;width:14px;height:14px;"></div>
<svg class="a" style="left:24px;top:753px;width:14px;height:14px" viewBox="0 0 14 14"><path d="M3 7.2L5.8 10.2L11 3.2" fill="none" stroke="#111" stroke-width="1.7"/></svg>
<svg class="a" style="left:44.0px;top:753.0px;width:16px;height:16px;overflow:visible" viewBox="0 0 16 16"><g fill="#2f5580"><rect x="1.500" y="1.500" width="4.400" height="4.400"/><rect x="10.300" y="1.500" width="4.400" height="4.400" fill="#3d6596"/><rect x="5.900" y="5.900" width="4.400" height="4.400" fill="#4a76ad"/><rect x="1.500" y="10.300" width="4.400" height="4.400" fill="#35608f"/></g><g fill="#a9c0dd"><rect x="5.900" y="1.500" width="4.400" height="4.400" fill="#8fb0d6"/><rect x="1.500" y="5.900" width="4.400" height="4.400" fill="#6c97cb"/><rect x="10.300" y="5.900" width="4.400" height="4.400" fill="#9bb9dd"/><rect x="5.900" y="10.300" width="4.400" height="4.400" fill="#6c97cb"/><rect x="10.300" y="10.300" width="4.400" height="4.400" fill="#c5d6ea"/></g></svg>
<div class="t " style="left:66px;top:751px;letter-spacing:-0.051px;font-weight:bold;color:#fff;"><u>Heatmap</u></div>
<svg class="a" style="left:247.0px;top:753.0px;width:16px;height:16px;overflow:visible" viewBox="0 0 16 16"><rect x="-0.500" y="-0.500" width="17" height="17" rx="2.500" fill="#f2f2f2" stroke="#d0d0d0" stroke-width=".600"/><rect x="2.500" y="5.500" width="11" height="5.500" fill="#f8f8f8" stroke="#888" stroke-width="1"/><path d="M4.500 3.500V5.500M6.800 3.500V5.500M9.200 3.500V5.500M11.500 3.500V5.500M4.500 11V13M6.800 11V13M9.200 11V13M11.500 11V13" stroke="#888" stroke-width=".900"/></svg>
<div class="a" style="left:44px;top:774px;width:16px;height:16px;background:#fff5f0"></div>
<div class="t " style="left:66px;top:772px;letter-spacing:-0.068px;">4.80341e-10</div>
<div class="a" style="left:44px;top:795px;width:16px;height:16px;background:#fee0d2"></div>
<div class="t " style="left:66px;top:793px;letter-spacing:0.012px;">77.2097300004179</div>
<div class="a" style="left:44px;top:816px;width:16px;height:16px;background:#fcbba1"></div>
<div class="t " style="left:66px;top:814px;letter-spacing:0.075px;">154.419460000355</div>
<div class="a" style="left:44px;top:837px;width:16px;height:16px;background:#fc9272"></div>
<div class="t " style="left:66px;top:835px;letter-spacing:-0.081px;">231.629190000293</div>
<div class="a" style="left:44px;top:858px;width:16px;height:16px;background:#fb6a4a"></div>
<div class="t " style="left:66px;top:856px;letter-spacing:0.137px;">308.838920000231</div>
<div class="a" style="left:44px;top:879px;width:16px;height:16px;background:#ef3b2c"></div>
<div class="t " style="left:66px;top:877px;letter-spacing:0.262px;">386.048650000168</div>
<div class="a" style="left:44px;top:900px;width:16px;height:16px;background:#cb181d"></div>
<div class="t " style="left:66px;top:898px;letter-spacing:0.200px;">463.258380000106</div>
<div class="a" style="left:44px;top:921px;width:16px;height:16px;background:#a50f15"></div>
<div class="t " style="left:66px;top:919px;letter-spacing:0.356px;">534.528900000048</div>
<div class="a" style="left:44px;top:942px;width:16px;height:16px;background:#67000d"></div>
<div class="t " style="left:66px;top:940px;letter-spacing:-0.389px;">593.921</div>
<div class="cb" style="left:24px;top:963px;width:14px;height:14px;"></div>
<div class="a" style="left:44px;top:963px;width:16px;height:16px;background:#c43c39;border:1px solid #8c2a28"></div>
<div class="t " style="left:66px;top:961px;font-weight:bold;font-style:italic;color:#808080;letter-spacing:-.2px;width:206px;overflow:hidden">kantonsgrenzen K4kant19970</div>
<div class="arrow-d" style="left:6px;top:990px"></div>
<div class="cb" style="left:24px;top:984px;width:14px;height:14px;"></div>
<svg class="a" style="left:24px;top:984px;width:14px;height:14px" viewBox="0 0 14 14"><path d="M3 7.2L5.8 10.2L11 3.2" fill="none" stroke="#111" stroke-width="1.7"/></svg>
<svg class="a" style="left:44.0px;top:984.0px;width:16px;height:16px;overflow:visible" viewBox="0 0 16 16"><g fill="#2f5580"><rect x="1.500" y="1.500" width="4.400" height="4.400"/><rect x="10.300" y="1.500" width="4.400" height="4.400" fill="#3d6596"/><rect x="5.900" y="5.900" width="4.400" height="4.400" fill="#4a76ad"/><rect x="1.500" y="10.300" width="4.400" height="4.400" fill="#35608f"/></g><g fill="#a9c0dd"><rect x="5.900" y="1.500" width="4.400" height="4.400" fill="#8fb0d6"/><rect x="1.500" y="5.900" width="4.400" height="4.400" fill="#6c97cb"/><rect x="10.300" y="5.900" width="4.400" height="4.400" fill="#9bb9dd"/><rect x="5.900" y="10.300" width="4.400" height="4.400" fill="#6c97cb"/><rect x="10.300" y="10.300" width="4.400" height="4.400" fill="#c5d6ea"/></g></svg>
<div class="t " style="left:66px;top:982px;letter-spacing:-0.226px;font-weight:bold;">Positron (retina)</div>
<div class="a" style="left:1px;top:1152px;width:271px;height:14px;background:#e2e2e2;border-top:1px solid #c4c4c4"></div>
<div class="a" style="left:14px;top:1153px;width:165px;height:13px;background:linear-gradient(#fcfcfc,#eeeeee);border-left:1px solid #bbb;border-right:1px solid #bbb"></div>
<div class="a" style="left:1px;top:1153px;width:13px;height:13px;background:#f3f3f3"></div>
<div class="a" style="left:258px;top:1153px;width:14px;height:13px;background:#f3f3f3;border-left:1px solid #bbb"></div>
<div class="a" style="left:5px;top:1155.5px;width:0;height:0;border-right:4px solid #444;border-top:3.5px solid transparent;border-bottom:3.5px solid transparent"></div>
<div class="a" style="left:263px;top:1155.5px;width:0;height:0;border-left:4px solid #444;border-top:3.5px solid transparent;border-bottom:3.5px solid transparent"></div>
<div class="a" style="left:279px;top:173px;width:1189px;height:994px;border:1px solid #b4b4b4;background:#d4dadc;overflow:hidden">
<svg class="a" style="left:-1px;top:-1px;width:1189px;height:994px" viewBox="279 173 1189 994">
<path d="M321.8 404.3 L312.0 408.8 L315.0 409.9 L321.8 410.6 L315.0 415.5 L310.5 415.5 L312.0 420.0 L306.0 419.3 L304.5 421.5 L296.3 420.0 L291.8 423.8 L292.5 426.8 L300.0 427.5 L310.5 428.3 L303.0 432.0 L295.5 433.5 L290.3 436.5 L292.5 441.8 L297.0 439.9 L298.5 444.0 L305.3 442.9 L312.0 442.5 L303.0 447.0 L298.5 448.5 L293.3 451.5 L300.0 452.3 L306.0 450.4 L313.5 449.3 L315.8 450.4 L307.5 454.5 L303.8 456.0 L309.0 456.4 L315.0 454.9 L315.0 457.5 L303.8 459.0 L306.0 460.1 L312.0 459.8 L318.0 459.4 L321.8 462.4 Z" fill="#f9f9f7" />
<path d="M279 825 L284 823 L288 821 L292 823 L296 821 L300 823 L304 825 L307 829 L312 832 L322 836 L322 1016 L550 1016 L540.0 1029.0 L533.2 1037.1 L526.4 1046.6 L521.0 1056.0 L522.4 1064.2 L523.7 1075.0 L527.8 1083.1 L535.9 1091.2 L529.2 1098.0 L518.3 1104.8 L510.2 1112.9 L503.4 1122.4 L499.4 1131.9 L495.3 1140.0 L483.1 1141.3 L469.6 1144.1 L460.1 1150.8 L453.3 1159.0 L449.9 1167.1 L279 1167 Z" fill="#f9f9f7" />
<path d="M347.7 1016.1 L349.1 1026.2 L347.0 1031.7 L350.4 1037.1 L355.8 1047.9 L353.1 1054.7 L353.8 1061.5 L347.7 1068.2 L334.2 1073.6 L324.7 1080.4 L323.3 1087.2 L319.3 1091.2 L311.1 1089.9 L307.1 1095.3 L299.0 1096.7 L290.8 1091.2 L280.0 1087.2" fill="none" stroke="#f3dcdd" stroke-width="1" stroke-linejoin="round" />
<path d="M347.7 1068.2 L355.8 1077.7 L364.0 1084.5 L372.1 1088.5 L382.9 1091.2 L391.0 1089.9 L401.9 1091.2 L410.0 1089.9 L418.1 1092.6 L427.6 1089.9 L433.0 1092.6 L437.1 1102.1 L433.0 1110.2 L439.8 1114.3 L446.6 1122.4 L450.6 1129.2 L449.3 1135.9 L454.7 1144.1 L460.1 1148.1" fill="none" stroke="#f3dcdd" stroke-width="1" stroke-linejoin="round" />
<path d="M439.8 1114.3 L446.6 1106.1 L461.4 1102.1 L472.3 1103.4 L475.0 1094.0 L485.8 1087.2 L491.2 1091.2 L495.3 1083.1 L491.2 1075.0 L484.5 1069.6 L488.5 1060.1 L479.1 1053.3 L479.1 1047.9 L488.5 1039.8 L491.2 1031.7 L502.1 1029.0 L510.2 1023.5 L521.0 1018.1" fill="none" stroke="#f3dcdd" stroke-width="1" stroke-linejoin="round" />
<path d="M491.2 1091.2 L487.2 1102.1 L489.9 1110.2 L488.5 1121.0 L496.7 1129.2" fill="none" stroke="#f3dcdd" stroke-width="1" stroke-linejoin="round" />
<path d="M483.1 1018.1 L491.2 1024.9 L502.1 1035.7" fill="none" stroke="#f3dcdd" stroke-width="1" stroke-linejoin="round" />
<path d="M280.0 1047.9 L290.8 1052.0 L301.7 1050.6 L313.9 1049.3 L324.7 1050.6 L334.2 1053.3 L343.6 1050.6 L350.4 1047.9" fill="none" stroke="#e4eaee" stroke-width="1" stroke-linejoin="round" />
<path d="M361.2 1049.3 L369.4 1058.7 L381.6 1065.5 L392.4 1057.4 L404.6 1053.3 L416.8 1050.6 L429.0 1050.6 L438.4 1052.0 L439.8 1037.1 L446.6 1023.5" fill="none" stroke="#e4eaee" stroke-width="1" stroke-linejoin="round" />
<path d="M301.7 1057.4 L304.4 1062.8" fill="none" stroke="#e4eaee" stroke-width="1" stroke-linejoin="round" />
<path d="M340.9 1056.0 L347.7 1064.2" fill="none" stroke="#e4eaee" stroke-width="1" stroke-linejoin="round" />
<path d="M280.0 1131.9 L290.8 1126.5 L304.4 1117.0 L320.6 1112.9 L336.9 1110.2 L355.8 1104.8 L372.1 1103.4" fill="none" stroke="#e4eaee" stroke-width="1" stroke-linejoin="round" />
<path d="M374.8 1104.8 L385.6 1110.2 L399.2 1114.3 L410.0 1110.2 L420.8 1104.8 L426.2 1104.8" fill="none" stroke="#e4eaee" stroke-width="1" stroke-linejoin="round" />
<path d="M296.2 1131.9 L292.2 1140.0 L288.1 1145.4" fill="none" stroke="#e4eaee" stroke-width="1" stroke-linejoin="round" />
<path d="M452.0 1035.7 L456.0 1042.5" fill="none" stroke="#e4eaee" stroke-width="1" stroke-linejoin="round" />
<path d="M322 841 L316 848 L318 856 L312 862 L314 872 L308 880 L310 888 L304 896 L300 906 L290 910 L280 908" fill="none" stroke="#f3dcdd" stroke-width="1" stroke-linejoin="round" />
<path d="M280 906 L292 912 L302 908 L312 912 L318 916 L320 926 L322 932" fill="none" stroke="#f3dcdd" stroke-width="1" stroke-linejoin="round" />
<path d="M322 940 L314 948 L306 952 L300 958 L298 970 L300 982 L294 990 L288 996 L286 1006 L282 1014" fill="none" stroke="#f3dcdd" stroke-width="1" stroke-linejoin="round" />
<path d="M300 958 L292 954 L284 958 L280 956" fill="none" stroke="#f3dcdd" stroke-width="1" stroke-linejoin="round" />
<path d="M322 976 L312 984 L304 990 L296 992" fill="none" stroke="#f3dcdd" stroke-width="1" stroke-linejoin="round" />
<path d="M296 848 L292 856 L288 864 L284 872" fill="none" stroke="#e4eaee" stroke-width="1" stroke-linejoin="round" />
<path d="M280 1004 L290 1010 L300 1012 L312 1014" fill="none" stroke="#e4eaee" stroke-width="1" stroke-linejoin="round" />
<path d="M622.5 1056.9 L630.0 1050.3 L639.4 1045.6 L646.9 1044.7 L645.0 1048.4 L651.6 1052.2 L657.2 1055.0 L654.4 1062.5 L648.8 1068.1 L642.2 1074.7 L637.5 1070.0 L630.9 1068.1 L629.1 1061.6 L623.4 1060.6 Z" fill="#f9f9f7" />
<path d="M670.3 1041.9 L678.8 1040.4 L684.4 1043.8 L687.2 1048.4 L685.3 1051.6 L680.6 1047.5 L675.0 1045.6 L671.3 1044.7 Z" fill="#f9f9f7" />
<path d="M573.8 1086.9 L577.5 1082.2 L585.0 1079.4 L588.4 1082.2 L585.0 1086.9 L579.4 1090.3 L574.7 1088.8 Z" fill="#f9f9f7" />
<path d="M579.0 1098.1 L581.3 1096.3 L585.9 1100.0 L580.3 1099.6 Z" fill="#f9f9f7" />
<path d="M829.7 1016.0 L834.4 1025.0 L838.1 1036.3 L834.4 1045.6 L840.0 1053.1 L836.3 1066.3 L834.4 1079.4 L838.1 1088.8 L845.6 1096.3 L851.3 1097.2 L858.8 1088.8 L862.5 1083.1 L870.0 1082.2 L875.6 1085.0 L879.4 1073.8 L880.3 1056.9 L879.4 1038.1 L883.1 1026.9 L884.1 1016.0 Z" fill="#f9f9f7" />
<path d="M828.8 1084.1 L831.0 1084.1 L831.0 1087.3 L828.8 1086.9 Z" fill="#f9f9f7" />
<path d="M834.0 1087.8 L836.6 1088.8 L836.3 1093.4 L834.0 1092.5 Z" fill="#f9f9f7" />
<path d="M1066.3 1016.1 L1072.4 1023.5 L1081.9 1030.3 L1088.6 1026.2 L1094.1 1029.0 L1099.5 1038.4 L1103.5 1047.9 L1110.3 1057.4 L1113.0 1069.6 L1119.8 1080.4 L1117.1 1087.2 L1107.6 1091.2 L1110.3 1096.7 L1107.6 1104.8 L1100.8 1112.9 L1103.5 1123.7 L1107.6 1125.8 L1117.1 1124.4 L1121.1 1115.6 L1125.2 1107.5 L1133.3 1098.0 L1132.0 1084.5 L1138.7 1077.7 L1150.9 1072.3 L1152.3 1068.2 L1148.9 1050.6 L1136.0 1043.9 L1125.2 1042.5 L1123.8 1035.7 L1127.9 1026.2 L1129.3 1016.1 Z" fill="#f9f9f7" />
<path d="M1176.7 1016.1 L1191.6 1016.1 L1190.2 1027.6 L1182.1 1024.9 L1178.0 1019.5 Z" fill="#f9f9f7" />
<path d="M1096.8 1016.1 L1094.1 1026.2 L1099.5 1033.0 L1109.0 1031.7 L1117.1 1033.0 L1119.8 1023.5 L1126.6 1019.5" fill="none" stroke="#f3dcdd" stroke-width="1" stroke-linejoin="round" />
<path d="M985.7 1137.3 L991.1 1131.9 L1000.6 1129.2 L1015.5 1122.4 L1019.6 1125.1 L1025.0 1126.5 L1031.8 1130.5 L1041.2 1129.2 L1054.8 1125.1 L1068.3 1119.7 L1075.1 1117.0 L1081.9 1118.3 L1088.6 1114.3 L1099.5 1110.2 L1095.4 1121.0 L1090.0 1131.9 L1087.3 1142.7 L1085.9 1153.5 L1090.0 1159.0 L1090.7 1167.1 L1031.8 1167.1 L1023.6 1163.0 L1014.2 1156.2 L1004.7 1152.2 L993.9 1150.8 L987.1 1144.1 Z" fill="#f9f9f7" />
<path d="M1234.9 1016.1 L1365.6 1016.1 L1369.6 1022.9 L1363.5 1030.3 L1355.4 1031.7 L1353.4 1026.2 L1356.8 1022.9 L1362.2 1020.8 L1360.8 1018.1 L1353.4 1020.2 L1351.3 1027.6 L1355.4 1034.4 L1362.2 1035.7 L1356.8 1041.1 L1347.3 1045.2 L1355.4 1047.2 L1369.0 1044.5 L1377.1 1049.3 L1386.6 1054.7 L1392.0 1058.7 L1400.1 1057.4 L1408.2 1060.1 L1409.6 1066.9 L1412.3 1075.0 L1413.6 1083.1 L1409.6 1089.9 L1402.8 1085.8 L1397.4 1080.4 L1390.6 1077.7 L1382.5 1073.6 L1375.7 1070.9 L1363.5 1069.6 L1355.4 1070.9 L1347.3 1066.9 L1339.2 1070.9 L1328.3 1072.3 L1322.9 1076.4 L1314.8 1077.7 L1306.7 1075.0 L1301.2 1077.7 L1295.8 1073.6 L1293.1 1066.9 L1287.7 1062.8 L1283.6 1066.9 L1279.6 1073.6 L1276.9 1069.6 L1279.6 1061.5 L1282.3 1053.3 L1295.8 1052.0 L1293.1 1047.2 L1283.6 1047.9 L1279.6 1049.9 L1271.5 1049.3 L1260.6 1043.9 L1249.8 1037.1 L1241.7 1027.6 Z" fill="#f9f9f7" />
<path d="M1367.6 1034.4 L1377.1 1033.7 L1386.6 1041.1 L1396.0 1043.9 L1405.5 1045.2 L1409.6 1053.3 L1416.3 1062.8 L1427.2 1064.2 L1427.2 1070.9 L1417.7 1070.9 L1409.6 1064.2 L1402.8 1057.4 L1394.7 1054.7 L1386.6 1052.0 L1378.4 1047.9 L1370.3 1042.5 Z" fill="#f9f9f7" />
<path d="M1306.7 1081.8 L1322.9 1076.4 L1341.9 1077.7 L1355.4 1079.1 L1369.0 1080.4 L1379.8 1077.7 L1382.5 1083.1 L1379.8 1091.2 L1393.3 1096.7 L1394.7 1103.4 L1382.5 1110.2 L1369.0 1104.8 L1366.2 1103.4 L1369.0 1111.6 L1377.1 1122.4 L1385.2 1138.6 L1392.0 1150.8 L1386.6 1150.8 L1379.8 1140.0 L1369.0 1137.3 L1366.2 1145.4 L1367.6 1157.6 L1360.8 1153.5 L1355.4 1140.0 L1347.3 1134.6 L1341.9 1144.1 L1336.5 1148.1 L1329.7 1137.3 L1328.3 1126.5 L1325.6 1117.0 L1314.8 1106.1 L1304.0 1099.4 L1306.7 1091.2 L1309.4 1085.8 Z" fill="#f9f9f7" />
<path d="M1278.2 1061.5 L1283.6 1062.8 L1285.0 1068.2 L1280.9 1072.3 L1277.5 1068.2 Z" fill="#f9f9f7" />
<path d="M1272.8 1085.8 L1276.9 1080.4 L1280.9 1076.4 L1283.6 1085.8 L1290.4 1091.2 L1285.0 1094.0 L1278.2 1091.2 L1273.5 1091.2 Z" fill="#f9f9f7" />
<path d="M1285.0 1103.4 L1289.1 1100.7 L1298.5 1107.5 L1295.8 1111.6 L1290.4 1110.2 Z" fill="#f9f9f7" />
<path d="M1432.6 1069.6 L1438.0 1068.2 L1447.5 1077.7 L1455.6 1083.1 L1454.3 1085.8 L1444.8 1081.8 L1436.7 1075.0 Z" fill="#f9f9f7" />
<path d="M1415.0 1027.6 L1419.1 1026.9 L1423.8 1033.0 L1421.8 1035.1 L1417.0 1031.7 Z" fill="#f9f9f7" />
<path d="M1385.2 1156.2 L1389.3 1159.0 L1389.9 1166.4 L1384.5 1166.4 L1383.2 1160.3 Z" fill="#f9f9f7" />
<ellipse cx="1457.6" cy="1035.1" rx="0.9" ry="1.5" fill="#f9f9f7" transform="rotate(-30 1457.6 1035.1)"/>
<ellipse cx="1423.1" cy="1089.9" rx="1.5" ry="2.7" fill="#f9f9f7" transform="rotate(20 1423.1 1089.9)"/>
<ellipse cx="1427.9" cy="1098.0" rx="1.2" ry="3.4" fill="#f9f9f7" transform="rotate(10 1427.9 1098.0)"/>
<ellipse cx="1445.5" cy="1092.6" rx="1.2" ry="2.4" fill="#f9f9f7" transform="rotate(-20 1445.5 1092.6)"/>
<ellipse cx="1462.4" cy="1087.9" rx="2.0" ry="1.2" fill="#f9f9f7" transform="rotate(-30 1462.4 1087.9)"/>
<ellipse cx="1458.3" cy="1107.5" rx="2.7" ry="4.7" fill="#f9f9f7" transform="rotate(35 1458.3 1107.5)"/>
<ellipse cx="1432.6" cy="1108.8" rx="1.4" ry="2.0" fill="#f9f9f7" transform="rotate(30 1432.6 1108.8)"/>
<ellipse cx="1442.1" cy="1115.6" rx="1.4" ry="2.7" fill="#f9f9f7" transform="rotate(-30 1442.1 1115.6)"/>
<ellipse cx="1436.7" cy="1129.2" rx="4.7" ry="2.0" fill="#f9f9f7" transform="rotate(-30 1436.7 1129.2)"/>
<ellipse cx="1462.4" cy="1125.1" rx="2.0" ry="1.5" fill="#f9f9f7" transform="rotate(-40 1462.4 1125.1)"/>
<ellipse cx="1452.9" cy="1129.2" rx="1.8" ry="0.8" fill="#f9f9f7" transform="rotate(-20 1452.9 1129.2)"/>
<ellipse cx="1388.6" cy="1096.7" rx="2.0" ry="1.8" fill="#f9f9f7" transform="rotate(0 1388.6 1096.7)"/>
<ellipse cx="1394.7" cy="1107.5" rx="1.8" ry="0.8" fill="#f9f9f7" transform="rotate(-30 1394.7 1107.5)"/>
<ellipse cx="1382.5" cy="1112.9" rx="1.1" ry="0.7" fill="#f9f9f7" transform="rotate(0 1382.5 1112.9)"/>
<ellipse cx="1465.8" cy="1104.8" rx="0.8" ry="2.0" fill="#f9f9f7" transform="rotate(10 1465.8 1104.8)"/>
<ellipse cx="1465.8" cy="1119.7" rx="0.7" ry="1.8" fill="#f9f9f7" transform="rotate(10 1465.8 1119.7)"/>
<path d="M1251.1 1016.1 L1249.8 1022.2 L1256.6 1023.5 L1260.6 1018.1" fill="none" stroke="#f3dcdd" stroke-width="1" stroke-linejoin="round" />
<path d="M1290.4 1016.1 L1295.8 1024.9 L1301.2 1030.3 L1302.6 1037.1 L1297.2 1042.5 L1293.1 1043.2" fill="none" stroke="#f3dcdd" stroke-width="1" stroke-linejoin="round" />
<path d="M1312.1 1053.3 L1314.8 1057.4 L1322.9 1057.4 L1328.3 1054.7 L1329.7 1064.2 L1327.0 1070.9" fill="none" stroke="#f3dcdd" stroke-width="1" stroke-linejoin="round" />
<path d="M1377.1 1070.9 L1382.5 1066.9 L1386.6 1069.6 L1391.3 1068.2 L1392.0 1061.5" fill="none" stroke="#f3dcdd" stroke-width="1" stroke-linejoin="round" />
<text x="282" y="889" font-family="Liberation Sans,sans-serif" font-size="8.5" fill="#8f9daa" text-anchor="start" transform="rotate(6 282 889)" >Ourense</text>
<text x="276" y="1003" font-family="Liberation Sans,sans-serif" font-size="13" fill="#8f9daa" text-anchor="start" transform="rotate(-2 276 1003)" letter-spacing="1" fill="#a5b0ba">AL</text>
<text x="339" y="1041" font-family="Liberation Sans,sans-serif" font-size="13" fill="#8f9daa" text-anchor="start" transform="rotate(10 339 1041)" letter-spacing="1" font-weight="bold" fill="#a5b0ba">SPAIN</text>
<text x="483" y="1055" font-family="Liberation Sans,sans-serif" font-size="9" fill="#8f9daa" text-anchor="start" transform="rotate(5 483 1055)" >Valencia</text>
<circle cx="519.5" cy="1056.5" r="1.2" fill="#7f8c98"/>
<text x="600" y="1062" font-family="Liberation Sans,sans-serif" font-size="9" fill="#8f9daa" text-anchor="start" transform="rotate(2 600 1062)" >Palma</text>
<circle cx="628" cy="1060.5" r="1.2" fill="#7f8c98"/>
<text x="313" y="1105" font-family="Liberation Sans,sans-serif" font-size="9" fill="#8f9daa" text-anchor="start" transform="rotate(6 313 1105)" >Córdoba</text>
<circle cx="350.5" cy="1109" r="1.2" fill="#7f8c98"/>
<text x="277" y="1120" font-family="Liberation Sans,sans-serif" font-size="9" fill="#8f9daa" text-anchor="start" transform="rotate(8 277 1120)" >Sevilla</text>
<circle cx="301.5" cy="1124" r="1.2" fill="#7f8c98"/>
<text x="454" y="1121" font-family="Liberation Sans,sans-serif" font-size="9" fill="#8f9daa" text-anchor="start" transform="rotate(4 454 1121)" >Murcia</text>
<circle cx="485" cy="1121.5" r="1.2" fill="#7f8c98"/>
<text x="351" y="1143" font-family="Liberation Sans,sans-serif" font-size="9" fill="#8f9daa" text-anchor="start" transform="rotate(7 351 1143)" >Granada</text>
<circle cx="388.5" cy="1148" r="1.2" fill="#7f8c98"/>
<text x="963" y="1029" font-family="Liberation Sans,sans-serif" font-size="9" fill="#8f9daa" text-anchor="middle"  font-style="italic" letter-spacing=".8">Mar</text>
<text x="963" y="1040" font-family="Liberation Sans,sans-serif" font-size="9" fill="#8f9daa" text-anchor="middle"  font-style="italic" letter-spacing=".8">Tirreno /</text>
<text x="963" y="1050" font-family="Liberation Sans,sans-serif" font-size="9" fill="#8f9daa" text-anchor="middle"  font-style="italic" letter-spacing=".8">Mer</text>
<text x="963" y="1060" font-family="Liberation Sans,sans-serif" font-size="9" fill="#8f9daa" text-anchor="middle" transform="rotate(-2 963 1060)" font-style="italic" letter-spacing=".8">Tyrrhénienne</text>
<text x="981" y="1132" font-family="Liberation Sans,sans-serif" font-size="9" fill="#8f9daa" text-anchor="start" transform="rotate(-3 981 1132)" >Palermo</text>
<circle cx="1018.5" cy="1125.5" r="1.2" fill="#7f8c98"/>
<text x="1051" y="1155" font-family="Liberation Sans,sans-serif" font-size="9" fill="#8f9daa" text-anchor="start" transform="rotate(-2 1051 1155)" >Catania</text>
<circle cx="1084.5" cy="1148.5" r="1.2" fill="#7f8c98"/>
<text x="1304" y="1049" font-family="Liberation Sans,sans-serif" font-size="11" fill="#8f9daa" text-anchor="start" transform="rotate(-11 1304 1049)" letter-spacing="1" font-weight="bold" fill="#a5b0ba">GREECE</text>
<text x="1296" y="1086" font-family="Liberation Sans,sans-serif" font-size="9" fill="#8f9daa" text-anchor="start" transform="rotate(-8 1296 1086)" >Patras</text>
<circle cx="1324" cy="1079.5" r="1.2" fill="#7f8c98"/>
<text x="1357" y="1088" font-family="Liberation Sans,sans-serif" font-size="10" fill="#8f9daa" text-anchor="start" transform="rotate(-11 1357 1088)" letter-spacing=".5" font-weight="bold" fill="#95a1ad">ATHENS</text>
<circle cx="1397.5" cy="1077" r="1.2" fill="#7f8c98"/>
<text x="1306" y="1141" font-family="Liberation Sans,sans-serif" font-size="9" fill="#8f9daa" text-anchor="start" transform="rotate(-8 1306 1141)" >Kalamata</text>
<circle cx="1347" cy="1132.5" r="1.2" fill="#7f8c98"/>
<text x="1437" y="1161" font-family="Liberation Sans,sans-serif" font-size="12" fill="#8f9daa" text-anchor="start" transform="rotate(-10 1437 1161)" letter-spacing="1.500" fill="#b0bac3">Κρήτη</text>
</svg></div>
<div class="grip" style="left:1471px;top:540px;width:3px;height:16px;"></div>
<div class="t " style="left:1476.5px;top:174px;letter-spacing:0.098px;">Verarbeitungswerkzeuge</div>
<svg class="a" style="left:1893px;top:178px;width:26px;height:12px" viewBox="0 0 26 12"><rect x="0.500" y="0.500" width="10.500" height="10.500" rx="2.500" fill="none" stroke="#5a5a5a"/><rect x="4.500" y="2.500" width="4.500" height="4" rx="1" fill="none" stroke="#5a5a5a" stroke-width=".9"/><rect x="2.500" y="4.500" width="4.500" height="4" rx="1" fill="#efefef" stroke="#5a5a5a" stroke-width=".9"/><rect x="14.500" y="0.500" width="10.500" height="10.500" rx="2.500" fill="none" stroke="#5a5a5a"/><path d="M17.200 3.200L22.300 8.300M22.300 3.200L17.200 8.300" stroke="#4a4a4a" stroke-width="1.900"/></svg>
<div class="pressed" style="left:1576px;top:198px;width:25px;height:24px;"></div>
<svg class="a" style="left:1484.0px;top:201.0px;width:16px;height:16px;overflow:visible" viewBox="0 0 16 16"><g stroke="#cc1f1f" stroke-width="1.600" stroke-linecap="round"><path d="M4 0.500V7.500M1 2.200L7 5.800M1 5.800L7 2.200"/></g><g stroke="#555" stroke-width="1.300" stroke-linecap="round"><path d="M10.500 4V11M7.500 5.700L13.500 9.300M7.500 9.300L13.500 5.700"/></g><circle cx="10.500" cy="7.500" r="1" fill="#efefef"/><g stroke="#5b88c0" stroke-width="1.300" stroke-linecap="round"><path d="M4.500 9V15M2 10.500L7 13.500M2 13.500L7 10.500"/></g><path d="M10.500 12.500H15.500L13 15.500Z" fill="#333"/></svg>
<svg class="a" style="left:1508.0px;top:201.0px;width:16px;height:16px;overflow:visible" viewBox="0 0 16 16"><ellipse cx="7" cy="6.500" rx="6.500" ry="4.800" fill="none" stroke="#8a8f96" stroke-width="2"/><text x="4.500" y="14" font-family="Liberation Serif,serif" font-weight="bold" font-size="12.500" fill="#2463b8">R</text><path d="M10.500 12.500H15.500L13 15.500Z" fill="#333"/></svg>
<svg class="a" style="left:1532.0px;top:201.0px;width:16px;height:16px;overflow:visible" viewBox="0 0 16 16"><g transform="scale(.62)"><path d="M11.8 1.5C8.5 1.5 7.5 2.8 7.5 4.5V7H12.2V8H5C3 8 1.8 9.5 1.8 12.2C1.8 15 3 16.4 5 16.4H7V13.6C7 11.8 8.5 10.4 10.3 10.4H15C16.5 10.4 17.6 9.2 17.6 7.7V4.5C17.6 2.8 15.8 1.5 11.8 1.5Z" fill="#3a75a8"/><circle cx="9.6" cy="4.2" r="1" fill="#fff"/><path d="M13.2 23C16.5 23 17.5 21.7 17.5 20V17.5H12.8V16.5H20C22 16.5 23.2 15 23.2 12.3C23.2 9.5 22 8.1 20 8.1H18V10.9C18 12.7 16.5 14.1 14.7 14.1H10C8.5 14.1 7.4 15.3 7.4 16.8V20C7.4 21.7 9.2 23 13.2 23Z" fill="#fdd43b"/><circle cx="15.4" cy="20.3" r="1" fill="#fff"/></g><path d="M10.500 12.500H15.500L13 15.500Z" fill="#333"/></svg>
<svg class="a" style="left:1557.0px;top:201.0px;width:16px;height:16px;overflow:visible" viewBox="0 0 16 16"><circle cx="8" cy="8" r="7" fill="#fdfdfd" stroke="#777" stroke-width="1"/><path d="M8 3.500V8L11 10.500" fill="none" stroke="#777" stroke-width="1"/></svg>
<svg class="a" style="left:1582.0px;top:201.0px;width:16px;height:16px;overflow:visible" viewBox="0 0 16 16"><path d="M2.500 1H10L13.500 4.500V15H2.500Z" fill="#f8f8f8" stroke="#888" stroke-width=".900"/><path d="M10 1V4.500H13.500" fill="none" stroke="#888" stroke-width=".800"/><path d="M4.500 6.500H11.500M4.500 9H11.500M4.500 11.500H11.500" stroke="#999" stroke-width="1.300"/></svg>
<svg class="a" style="left:1613.0px;top:201.0px;width:16px;height:16px;opacity:.5;filter:grayscale(.6);overflow:visible" viewBox="0 0 16 16"><rect x="1.500" y="1.500" width="10" height="9" rx="1.500" fill="#ccc5b0" stroke="#aaa" stroke-width=".500"/><path d="M8 14.500L9 11L14 3.500L15.500 4.500L10.500 12Z" fill="#ddd" stroke="#aaa" stroke-width=".600"/></svg>
<svg class="a" style="left:1646.0px;top:201.0px;width:16px;height:16px;overflow:visible" viewBox="0 0 16 16"><g transform="scale(.667)"><path d="M8.400 12L12 8.600L23 19L19.600 22.800Z" fill="#ecd774" stroke="#5a4f1e" stroke-width="1" stroke-linejoin="round"/><path d="M8.400 12L12 8.600L13.600 10.100L10 13.500Z" fill="#3a3a3a"/><path d="M4.720 2.320A5.200 5.200 0 1 1 2.320 4.720L6 8.400L8.400 6Z" fill="#f2f2f2" stroke="#6e6e6e" stroke-width="1" stroke-linejoin="round"/><path d="M9.400 11L11 9.400" stroke="#c8c8c8" stroke-width="2.400"/><circle cx="20.600" cy="20.200" r="1" fill="#b9b9b9" stroke="#777" stroke-width=".400"/></g></svg>
<div class="sep" style="left:1606px;top:198px;width:1px;height:22px;"></div>
<div class="sep" style="left:1638px;top:198px;width:1px;height:22px;"></div>
<div class="a" style="left:1474px;top:225px;width:446px;height:28px;border:1px solid #b0b0b0;border-radius:3px;background:#fff"></div>
<svg class="a" style="left:1484.0px;top:232.0px;width:14px;height:14px;overflow:visible" viewBox="0 0 16 16"><circle cx="6.500" cy="6.500" r="4.500" fill="none" stroke="#7a7a7a" stroke-width="1.400"/><path d="M10 10L14.500 14.500" stroke="#7a7a7a" stroke-width="1.600" stroke-linecap="round"/></svg>
<div class="t " style="left:1503px;top:229px;letter-spacing:0.076px;">heat</div>
<svg class="a" style="left:1898.0px;top:231.0px;width:14px;height:14px;overflow:visible" viewBox="0 0 16 16"><path d="M0.500 8L5 2.500H15.500V13.500H5Z" fill="#8c8c8c"/><path d="M7.500 5.500L12.500 10.500M12.500 5.500L7.500 10.500" stroke="#fff" stroke-width="1.500"/></svg>
<div class="box" style="left:1474px;top:252px;width:446px;height:415px;"></div>
<div class="arrow-d" style="left:1481px;top:262px"></div>
<svg class="a" style="left:1498.0px;top:256.0px;width:16px;height:16px;overflow:visible" viewBox="0 0 16 16"><circle cx="8" cy="8" r="7" fill="#fdfdfd" stroke="#777" stroke-width="1"/><path d="M8 3.500V8L11 10.500" fill="none" stroke="#777" stroke-width="1"/></svg>
<div class="t " style="left:1520px;top:254px;letter-spacing:0.015px;">Kürzlich verwendet</div>
<div class="a" style="left:1476px;top:274px;width:443px;height:21px;background:#308cc6"></div>
<svg class="a" style="left:1518.0px;top:277.0px;width:16px;height:16px;overflow:visible" viewBox="0 0 16 16"><circle cx="9.500" cy="10" r="5.200" fill="#6f9a3a" opacity=".750"/><circle cx="9.500" cy="10" r="3.200" fill="#b7d94e"/><circle cx="9.500" cy="10" r="1.500" fill="#e9f58a"/><circle cx="4" cy="4.200" r="2.600" fill="#7d9a3a" opacity=".700"/><circle cx="4" cy="4.200" r="1.400" fill="#e0d84a"/></svg>
<div class="t " style="left:1540px;top:275px;letter-spacing:-0.048px;color:#fff">Heatmap (Kerndichtenschätzung)</div>
<div class="arrow-d" style="left:1481px;top:304px"></div>
<svg class="a" style="left:1498.0px;top:298.0px;width:16px;height:16px;overflow:visible" viewBox="0 0 16 16"><path d="M8 1.500A6.500 6.500 0 1 0 8 14.500A6.500 6.500 0 0 0 12.500 12.700L15 15.200H11.500L10.200 13.900A6.500 6.500 0 0 1 8 14.500" fill="none" stroke="#5d9a2b" stroke-width="0"/><circle cx="7.500" cy="7.500" r="5" fill="none" stroke="#6aa72f" stroke-width="3"/><path d="M8 7.500H11L15.500 12V15H13Z" fill="#ee7913"/><path d="M9.500 9L15 14.500" stroke="#f0e64a" stroke-width="1.200"/></svg>
<div class="t " style="left:1520px;top:296px;letter-spacing:0.245px;">Interpolation</div>
<svg class="a" style="left:1518.0px;top:319.0px;width:16px;height:16px;overflow:visible" viewBox="0 0 16 16"><circle cx="9" cy="9.500" r="5.500" fill="#fbc8c0"/><circle cx="9" cy="9.500" r="3.600" fill="#fde047"/><circle cx="4" cy="4" r="2.600" fill="#fbc8c0"/><circle cx="4" cy="4" r="1.600" fill="#fde047"/></svg>
<div class="t " style="left:1540px;top:317px;letter-spacing:-0.048px;">Heatmap (Kerndichtenschätzung)</div>
<div class="arrow-d" style="left:1481px;top:346px"></div>
<svg class="a" style="left:1498.0px;top:340.0px;width:16px;height:16px;overflow:visible" viewBox="0 0 16 16"><path d="M8 2.300L14.200 8.500L8 14.700L1.800 8.500Z" fill="#e0e0e0" stroke="#555" stroke-width=".700"/><path d="M8 0.800L14.200 7L8 13.200L1.800 7Z" fill="#f8f8f8" stroke="#666" stroke-width=".700"/><path d="M8 11.800C8 8.500 6.500 6 4.300 5.200C6.500 5.500 7.600 6.800 8 8.800C8.400 6.300 9.600 4.600 11.700 4.200C10 5.500 8.900 8 8.600 11.800Z" fill="#2e9a2e" stroke="#1b7a1b" stroke-width=".500"/><path d="M8 11V2.800" stroke="#2e9a2e" stroke-width="1.200"/><path d="M2.500 15.500H13.500" stroke="#333" stroke-width=".900"/></svg>
<div class="t " style="left:1520px;top:338px;letter-spacing:-1.403px;">GRASS</div>
<div class="arrow-d" style="left:1501px;top:366px"></div>
<div class="t " style="left:1518px;top:358px;letter-spacing:0.060px;">Bildbearbeitung (i.*)</div>
<svg class="a" style="left:1538.0px;top:380.0px;width:16px;height:16px;overflow:visible" viewBox="0 0 16 16"><path d="M8 2.300L14.200 8.500L8 14.700L1.800 8.500Z" fill="#e0e0e0" stroke="#555" stroke-width=".700"/><path d="M8 0.800L14.200 7L8 13.200L1.800 7Z" fill="#f8f8f8" stroke="#666" stroke-width=".700"/><path d="M8 11.800C8 8.500 6.500 6 4.300 5.200C6.500 5.500 7.600 6.800 8 8.800C8.400 6.300 9.600 4.600 11.700 4.200C10 5.500 8.900 8 8.600 11.800Z" fill="#2e9a2e" stroke="#1b7a1b" stroke-width=".500"/><path d="M8 11V2.800" stroke="#2e9a2e" stroke-width="1.200"/><path d="M2.500 15.500H13.500" stroke="#333" stroke-width=".900"/></svg>
<div class="t " style="left:1560px;top:378px;letter-spacing:-0.146px;">i.eb.hsebal01.coords</div>
<svg class="a" style="left:1538.0px;top:401.0px;width:16px;height:16px;overflow:visible" viewBox="0 0 16 16"><path d="M8 2.300L14.200 8.500L8 14.700L1.800 8.500Z" fill="#e0e0e0" stroke="#555" stroke-width=".700"/><path d="M8 0.800L14.200 7L8 13.200L1.800 7Z" fill="#f8f8f8" stroke="#666" stroke-width=".700"/><path d="M8 11.800C8 8.500 6.500 6 4.300 5.200C6.500 5.500 7.600 6.800 8 8.800C8.400 6.300 9.600 4.600 11.700 4.200C10 5.500 8.900 8 8.600 11.800Z" fill="#2e9a2e" stroke="#1b7a1b" stroke-width=".500"/><path d="M8 11V2.800" stroke="#2e9a2e" stroke-width="1.200"/><path d="M2.500 15.500H13.500" stroke="#333" stroke-width=".900"/></svg>
<div class="t " style="left:1560px;top:399px;letter-spacing:0.094px;">i.eb.soilheatflux</div>
<div class="grip" style="left:1690px;top:668px;width:16px;height:3px;"></div>
<div class="t " style="left:1476.5px;top:674px;letter-spacing:-0.050px;">Ergebnisanzeige</div>
<svg class="a" style="left:1893px;top:678px;width:26px;height:12px" viewBox="0 0 26 12"><rect x="0.500" y="0.500" width="10.500" height="10.500" rx="2.500" fill="none" stroke="#5a5a5a"/><rect x="4.500" y="2.500" width="4.500" height="4" rx="1" fill="none" stroke="#5a5a5a" stroke-width=".9"/><rect x="2.500" y="4.500" width="4.500" height="4" rx="1" fill="#efefef" stroke="#5a5a5a" stroke-width=".9"/><rect x="14.500" y="0.500" width="10.500" height="10.500" rx="2.500" fill="none" stroke="#5a5a5a"/><path d="M17.200 3.200L22.300 8.300M22.300 3.200L17.200 8.300" stroke="#4a4a4a" stroke-width="1.900"/></svg>
<div class="box" style="left:1474px;top:694px;width:446px;height:235px;"></div>
<div class="grip" style="left:1690px;top:930px;width:16px;height:3px;"></div>
<div class="box" style="left:1474px;top:934px;width:446px;height:233px;"></div>
<div class="a" style="left:0px;top:1167px;width:1920px;height:33px;background:#efefef"></div>
<div class="a" style="left:4px;top:1170px;width:317px;height:27px;border:1px solid #b0b0b0;border-radius:3px;background:#fff"></div>
<svg class="a" style="left:12.0px;top:1177.0px;width:14px;height:14px;overflow:visible" viewBox="0 0 16 16"><circle cx="6.500" cy="6.500" r="4.500" fill="none" stroke="#7a7a7a" stroke-width="1.400"/><path d="M10 10L14.500 14.500" stroke="#7a7a7a" stroke-width="1.600" stroke-linecap="round"/></svg>
<div class="t " style="left:33.5px;top:1174px;letter-spacing:-0.189px;color:#7a7a7a">Zu suchender Typ (Strg+K)</div>
<div class="t " style="left:330px;top:1175px;letter-spacing:-0.550px;font-size:13px">Eintrag der Legende gelöscht.</div>
<div class="t " style="left:978px;top:1175px;letter-spacing:-0.488px;font-size:13px">Koordinate</div>
<div class="a" style="left:1041px;top:1172px;width:115px;height:24px;border:1px solid #b0b0b0;border-radius:3px;background:#fff"></div>
<div class="t " style="left:1052.5px;top:1175px;letter-spacing:-1.055px;font-size:13px;">3251504,2519171</div>
<svg class="a" style="left:1160.0px;top:1176.0px;width:16px;height:16px;overflow:visible" viewBox="0 0 16 16"><circle cx="7" cy="6.500" r="5" fill="none" stroke="#444" stroke-width="1.300"/><path d="M3.500 10L10.500 3M7 1.500V11.500" stroke="#444" stroke-width="1"/><path d="M9 7V15.500L11 13.800L12.300 16L13.800 15.300L12.500 13H15Z" fill="#fff" stroke="#222" stroke-width=".800"/><path d="M1 1L4 3" stroke="#444" stroke-width="1.200"/></svg>
<div class="t " style="left:1189.5px;top:1175px;letter-spacing:-0.725px;font-size:13px">Maßstab</div>
<div class="a" style="left:1239px;top:1170px;width:100px;height:27px;border:1px solid #b0b0b0;border-radius:3px;background:#fff"></div>
<div class="a" style="left:1318px;top:1171px;width:1px;height:25px;background:#c8c8c8"></div>
<div class="t " style="left:1243.5px;top:1175px;letter-spacing:-0.495px;font-size:13px">1:9094609</div>
<div class="arrow-d" style="left:1324px;top:1182px;"></div>
<svg class="a" style="left:1349.0px;top:1176.0px;width:16px;height:16px;overflow:visible" viewBox="0 0 16 16"><path d="M4.500 7V5C4.500 0.500 11.500 0.500 11.500 5V7" fill="none" stroke="#777" stroke-width="1.800"/><rect x="2.500" y="7" width="11" height="8" rx="1" fill="#666"/></svg>
<div class="t " style="left:1373px;top:1175px;letter-spacing:-0.458px;font-size:13px">Vergrößerung</div>
<div class="a" style="left:1451px;top:1171px;width:95px;height:26px;border:1px solid #b0b0b0;border-radius:3px;background:#fff"></div>
<div class="t " style="left:1456px;top:1175px;letter-spacing:-0.562px;font-size:13px">100%</div>
<div class="a" style="left:1531px;top:1173px;width:1px;height:22px;background:#c8c8c8"></div>
<div class="a" style="left:1534px;top:1177px;width:0;height:0;border-bottom:4px solid #5a5a5a;border-left:4px solid transparent;border-right:4px solid transparent"></div>
<div class="a" style="left:1534px;top:1187px;width:0;height:0;border-top:4px solid #5a5a5a;border-left:4px solid transparent;border-right:4px solid transparent"></div>
<div class="t " style="left:1555px;top:1175px;letter-spacing:-0.552px;font-size:13px">Drehung</div>
<div class="a" style="left:1611px;top:1171px;width:95px;height:26px;border:1px solid #b0b0b0;border-radius:3px;background:#fff"></div>
<div class="t " style="left:1616px;top:1175px;letter-spacing:-0.276px;font-size:13px">0,0 °</div>
<div class="a" style="left:1691px;top:1173px;width:1px;height:22px;background:#c8c8c8"></div>
<div class="a" style="left:1694px;top:1177px;width:0;height:0;border-bottom:4px solid #5a5a5a;border-left:4px solid transparent;border-right:4px solid transparent"></div>
<div class="a" style="left:1694px;top:1187px;width:0;height:0;border-top:4px solid #5a5a5a;border-left:4px solid transparent;border-right:4px solid transparent"></div>
<div class="cb" style="left:1712px;top:1177px;width:14px;height:14px;"></div>
<svg class="a" style="left:1712px;top:1177px;width:14px;height:14px" viewBox="0 0 14 14"><path d="M3 7.2L5.8 10.2L11 3.2" fill="none" stroke="#111" stroke-width="1.7"/></svg>
<div class="t " style="left:1731px;top:1175px;letter-spacing:-0.685px;font-size:13px">Zeichnen</div>
<svg class="a" style="left:1795.0px;top:1176.0px;width:16px;height:16px;overflow:visible" viewBox="0 0 16 16"><circle cx="8" cy="8" r="6.800" fill="#f2f2f2" stroke="#888" stroke-width=".900"/><g fill="none" stroke="#888" stroke-width=".700"><ellipse cx="8" cy="8" rx="3.200" ry="6.800"/><path d="M8 1.200V14.800M1.200 8H14.800M2.500 4.500H13.500M2.500 11.500H13.500"/></g><path d="M1 11L15 5" stroke="#666" stroke-width=".800"/></svg>
<div class="t " style="left:1814px;top:1175px;letter-spacing:-1.073px;font-size:13px">EPSG:2056</div>
<svg class="a" style="left:1897.0px;top:1176.0px;width:16px;height:16px;overflow:visible" viewBox="0 0 16 16"><path d="M8 1.500C12 1.500 15 4 15 7.500C15 11 12 13.500 8 13.500C7 13.500 6 13.300 5.200 13L2 15L3 11.800C1.700 10.700 1 9.200 1 7.500C1 4 4 1.500 8 1.500Z" fill="#5a5a5a"/><g fill="#efefef"><circle cx="5" cy="7.500" r="1"/><circle cx="8" cy="7.500" r="1"/><circle cx="11" cy="7.500" r="1"/></g></svg>
<div class="a" style="left:322px;top:129px;width:1165px;height:887px;background:#efefef;border-radius:5px 5px 0 0;box-shadow:0 1px 5px rgba(0,0,0,.3),0 3px 20px 1px rgba(0,0,0,.42)"></div>
<div class="a" style="left:322px;top:129px;width:1165px;height:32px;background:#383838;border-radius:5px 5px 0 0"></div>
<div class="t " style="left:817.5px;top:135px;letter-spacing:-0.458px;color:#f0f0f0;font-weight:bold;font-size:15px;">Nächster Nachbaranalyse</div>
<svg class="a" style="left:1465px;top:140px;width:10px;height:10px" viewBox="0 0 10 10"><path d="M1.5 1.5L8.5 8.5M8.5 1.5L1.5 8.5" stroke="#e0e0e0" stroke-width="1.8"/></svg>
<div class="a" style="left:333px;top:201px;width:871px;height:713px;border:1px solid #b4b4b4;background:#efefef"></div>
<div class="a" style="left:428px;top:175px;width:87px;height:27px;border:1px solid #b4b4b4;border-radius:3px 3px 0 0;background:linear-gradient(#ececec,#e2e2e2)"></div>
<div class="a" style="left:333px;top:172px;width:96px;height:30px;border:1px solid #b4b4b4;border-bottom:none;border-radius:3px 3px 0 0;background:linear-gradient(#fafafa,#efefef)"></div>
<div class="t " style="left:345.3px;top:178px;letter-spacing:-0.070px;">Parameter</div>
<div class="t " style="left:439.7px;top:179px;letter-spacing:0.282px;">Protokoll</div>
<div class="t " style="left:339px;top:207px;letter-spacing:-0.130px;">Eingabelayer</div>
<div class="a" style="left:339px;top:232px;width:752px;height:27px;border:1px solid #b0b0b0;border-radius:3px;background:linear-gradient(#fefefe,#ededed)"></div>
<svg class="a" style="left:344px;top:238px;width:16px;height:16px" viewBox="0 0 16 16"><circle cx="4" cy="11" r="1.2" fill="none" stroke="#999" stroke-width=".7"/><circle cx="5.5" cy="6" r="1" fill="none" stroke="#999" stroke-width=".7"/><circle cx="11" cy="3.5" r="1.1" fill="none" stroke="#999" stroke-width=".7"/></svg>
<div class="t " style="left:363.75px;top:236px;letter-spacing:-0.256px;">14c_data_epsg2056 [EPSG:2056]</div>
<div class="arrow-d" style="left:1075px;top:244px;"></div>
<svg class="a" style="left:1100.0px;top:232.5px;width:24px;height:24px;overflow:visible" viewBox="0 0 24 24"><g fill="#8cc48c" stroke="#4b9a50" stroke-width=".9" stroke-linejoin="round"><path d="M6.900 4.400H5.600Q0.900 4.400 0.900 9.100V14.800Q0.900 19.500 5.600 19.500H10.600V21.500L14.900 17.800L10.600 13.500V16.100H5.600Q4.300 16.100 4.300 14.800V9.100Q4.300 7.800 5.600 7.800H6.900Z"/><path d="M16.300 19.500H18.500Q23.200 19.500 23.200 14.800V9.100Q23.200 4.400 18.500 4.400H13.500V2.400L9.200 6.100L13.500 9.800V7.800H18.500Q19.800 7.800 19.800 9.100V14.800Q19.800 16.100 18.500 16.100H16.300Z"/></g></svg>
<svg class="a" style="left:1136.0px;top:232.5px;width:24px;height:24px;overflow:visible" viewBox="0 0 24 24"><path d="M8.400 12L12 8.600L23 19L19.600 22.800Z" fill="#ecd774" stroke="#5a4f1e" stroke-width="1" stroke-linejoin="round"/><path d="M8.400 12L12 8.600L13.600 10.100L10 13.500Z" fill="#3a3a3a"/><path d="M4.720 2.320A5.200 5.200 0 1 1 2.320 4.720L6 8.400L8.400 6Z" fill="#f2f2f2" stroke="#6e6e6e" stroke-width="1" stroke-linejoin="round"/><path d="M9.400 11L11 9.400" stroke="#c8c8c8" stroke-width="2.400"/><circle cx="20.600" cy="20.200" r="1" fill="#b9b9b9" stroke="#777" stroke-width=".400"/></svg>
<div class="btn" style="left:1169.3px;top:232px;width:28.5px;height:26px"></div>
<div class="t " style="left:1176.3px;top:236.0px;font-size:15px;letter-spacing:0">…</div>
<div class="a" style="left:1189.8px;top:251px;width:0;height:0;border-top:3px solid #444;border-left:3px solid transparent;border-right:3px solid transparent"></div>
<div class="a" style="left:340px;top:271px;width:14px;height:14px;border:1px solid #bdbdbd;background:#f4f4f4;border-radius:2px"></div>
<div class="t " style="left:358.4px;top:268px;letter-spacing:-0.015px;color:#b0b0b0">Nur gewählte Symbole</div>
<div class="t " style="left:339px;top:296px;letter-spacing:0.058px;">Nächster Nachbar [optional]</div>
<div class="a" style="left:339px;top:321px;width:824px;height:27px;border:1px solid #b0b0b0;border-radius:3px;background:#fff"></div>
<div class="t " style="left:342px;top:325px;letter-spacing:0.059px;color:#888;">[In temporärer Datei speichern]</div>
<div class="btn" style="left:1169.3px;top:321.5px;width:28.5px;height:26px"></div>
<div class="t " style="left:1176.3px;top:325.5px;font-size:15px;letter-spacing:0">…</div>
<div class="a" style="left:1189.8px;top:340.5px;width:0;height:0;border-top:3px solid #444;border-left:3px solid transparent;border-right:3px solid transparent"></div>
<div class="a" style="left:1208px;top:174px;width:0;height:0;border-right:4px solid #444;border-top:4px solid transparent;border-bottom:4px solid transparent"></div>
<div class="grip" style="left:1210px;top:538px;width:3px;height:16px;"></div>
<div class="a" style="left:1220px;top:172px;width:256px;height:742px;border:1px solid #b4b4b4;background:#fff"></div>
<div class="t " style="left:1226px;top:181px;letter-spacing:-0.469px;font-size:22px;font-weight:bold;color:#505050;line-height:26px;height:26px;margin-top:-3px">Nächster</div>
<div class="t " style="left:1226px;top:207px;letter-spacing:-0.576px;font-size:22px;font-weight:bold;color:#505050;line-height:26px;height:26px;margin-top:-3px">Nachbaranalyse</div>
<div class="t " style="left:1225.3px;top:242px;letter-spacing:0.093px;color:#555;">Dieser Algorithmus führt eine</div>
<div class="t " style="left:1225.3px;top:260px;letter-spacing:-0.070px;color:#555;">nächster Nachbar-Analyse für einen</div>
<div class="t " style="left:1225.3px;top:278px;letter-spacing:-0.213px;color:#555;">Punktlayer aus.</div>
<div class="t " style="left:1225.3px;top:309px;letter-spacing:-0.127px;color:#555;">Das Ergebnis wird als HTML-Datei</div>
<div class="t " style="left:1225.3px;top:327px;letter-spacing:0.028px;color:#555;">mit den berechneten statistischen</div>
<div class="t " style="left:1225.3px;top:345px;letter-spacing:-0.100px;color:#555;">Werten ausgegeben.</div>
<div class="a" style="left:333px;top:945px;width:1057px;height:27px;border:1px solid #b0b0b0;border-radius:3px;background:#fff"></div>
<div class="t " style="left:849.7px;top:949px;letter-spacing:0.560px;">0%</div>
<div class="btn" style="left:1396px;top:945px;width:80px;height:27px;background:#efefef;border-color:#c4c4c4"></div>
<div class="t " style="left:1408.5px;top:949px;letter-spacing:-0.167px;color:#b4b4b4">Abbruch</div>
<div class="btn" style="left:333px;top:978px;width:79px;height:27px;"></div>
<svg class="a" style="left:348.0px;top:985.0px;width:14px;height:14px;overflow:visible" viewBox="0 0 16 16"><rect x="0.500" y="0.500" width="15" height="15" rx="1.500" fill="#f2f2f2" stroke="#666" stroke-width="1"/><circle cx="8" cy="8" r="4.600" fill="#fff" stroke="#d62020" stroke-width="2.400"/><path d="M8 2V14M2 8H14" stroke="#fff" stroke-width="1.300"/><circle cx="8" cy="8" r="2" fill="#fff" stroke="#a01010" stroke-width=".500"/></svg>
<div class="t " style="left:365.3px;top:982px;letter-spacing:-0.037px;">Help</div>
<div class="btn" style="left:419px;top:978px;width:208px;height:27px;"></div>
<div class="t " style="left:433.4px;top:982px;letter-spacing:-0.108px;">Als Batchprozess starten…</div>
<div class="btn" style="left:1310px;top:978px;width:80px;height:27px;"></div>
<svg class="a" style="left:1323.0px;top:986.0px;width:12px;height:12px;overflow:visible" viewBox="0 0 16 16"><path d="M3 3L13 13M13 3L3 13" stroke="#8c8c8c" stroke-width="3.200" stroke-linecap="round"/><path d="M3 3L13 13M13 3L3 13" stroke="#c8c8c8" stroke-width="1.200" stroke-linecap="round"/></svg>
<div class="t " style="left:1339px;top:982px;letter-spacing:-0.350px;"><u>C</u>lose</div>
<div class="btn" style="left:1396px;top:978px;width:80px;height:27px;border-color:#3a7fb5;box-shadow:inset 0 0 0 1px #a9cbe6;background:linear-gradient(#fbfdff,#dfe9f2)"></div>
<svg class="a" style="left:1405.5px;top:982.5px;width:16px;height:16px;overflow:visible" viewBox="0 0 16 16"><path d="M9 0.500H15.500V9.500H7.500V13L0.500 8.500L7.500 4V7H9Z" fill="#6f8a5a" stroke="#465c37" stroke-width=".800" stroke-linejoin="round"/></svg>
<div class="t " style="left:1423.3px;top:982px;letter-spacing:-0.103px;">Starte</div>
</body></html>
